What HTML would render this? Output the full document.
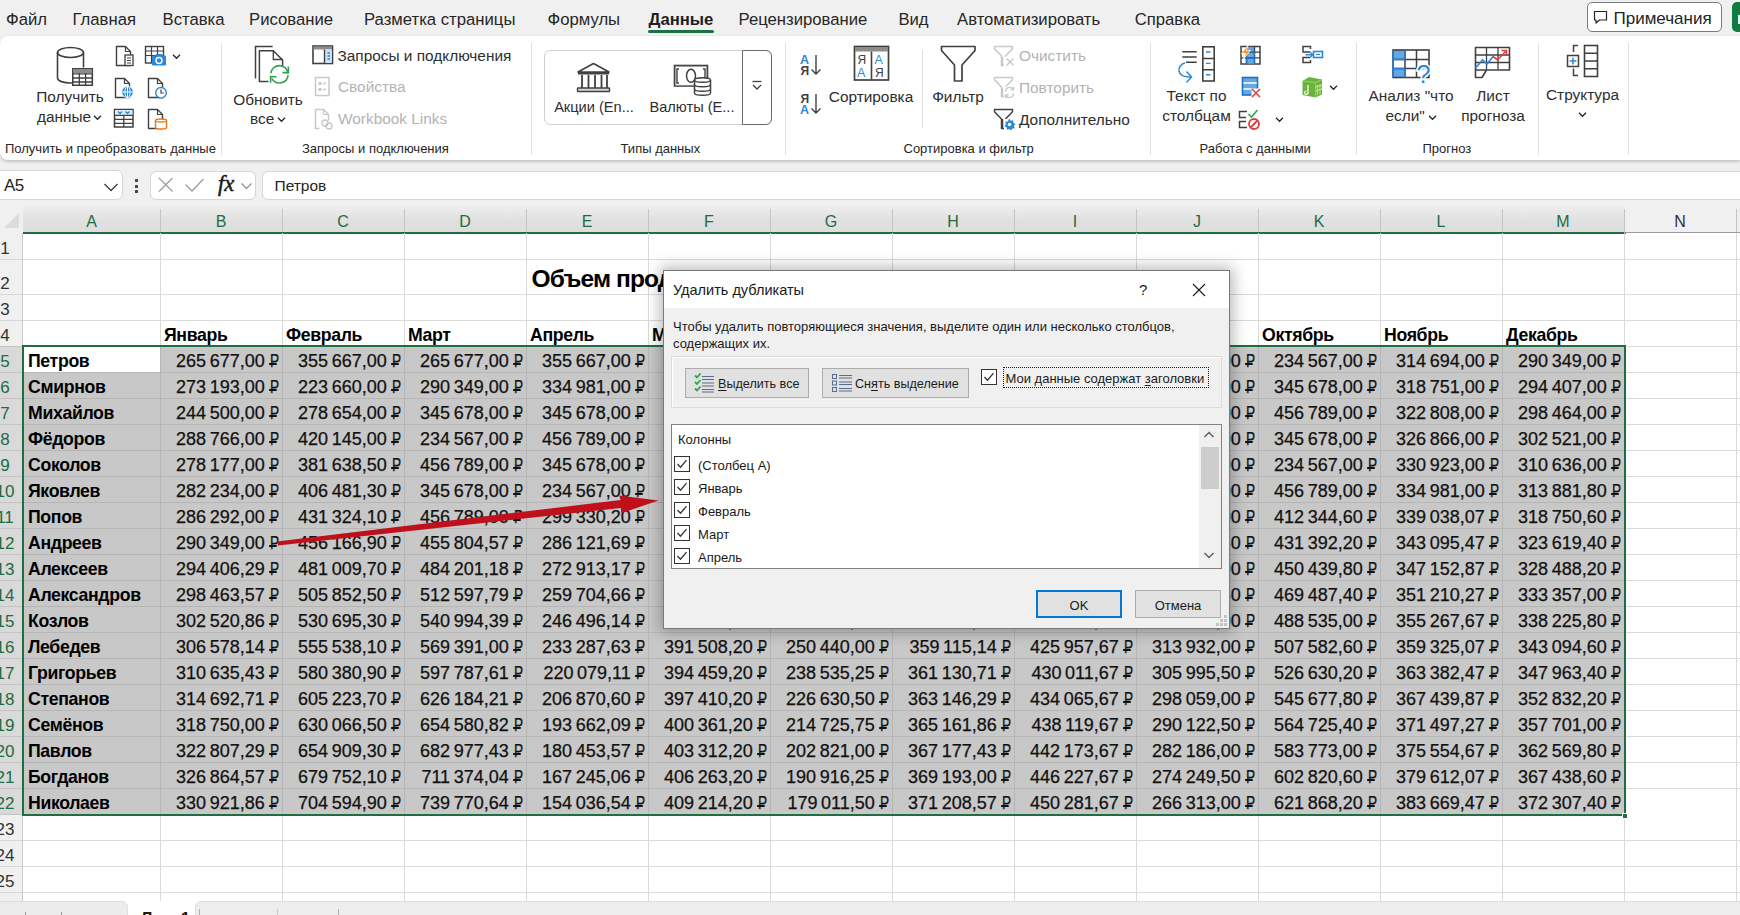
<!DOCTYPE html><html><head><meta charset="utf-8"><style>
html,body{margin:0;padding:0;}
body{width:1740px;height:915px;overflow:hidden;position:relative;background:#f0f0f0;font-family:"Liberation Sans",sans-serif;}
div,svg{box-sizing:border-box;}
.r{position:relative;display:inline-block;transform:scaleX(.76);transform-origin:100% 50%;margin-left:-2.8px;}
.r:after{content:"";position:absolute;left:-0.07em;width:0.57em;bottom:0.31em;height:0.08em;background:currentColor;}
.c{-webkit-text-stroke:0.25px #111;}
.u{text-decoration:underline;text-underline-offset:2px;}
</style></head><body>
<div style="position:absolute;left:0px;top:0px;width:1740px;height:36px;background:#f0f0f0"></div>
<div style="position:absolute;left:6px;top:11.6px;font-size:16.7px;line-height:16.7px;font-weight:400;color:#262626;white-space:pre;">Файл</div>
<div style="position:absolute;left:72.5px;top:11.6px;font-size:16.7px;line-height:16.7px;font-weight:400;color:#262626;white-space:pre;">Главная</div>
<div style="position:absolute;left:162.5px;top:11.6px;font-size:16.7px;line-height:16.7px;font-weight:400;color:#262626;white-space:pre;">Вставка</div>
<div style="position:absolute;left:249px;top:11.6px;font-size:16.7px;line-height:16.7px;font-weight:400;color:#262626;white-space:pre;">Рисование</div>
<div style="position:absolute;left:364px;top:11.6px;font-size:16.7px;line-height:16.7px;font-weight:400;color:#262626;white-space:pre;">Разметка страницы</div>
<div style="position:absolute;left:547.5px;top:11.6px;font-size:16.7px;line-height:16.7px;font-weight:400;color:#262626;white-space:pre;">Формулы</div>
<div style="position:absolute;left:648.5px;top:11.6px;font-size:16.7px;line-height:16.7px;font-weight:700;color:#1f1f1f;white-space:pre;">Данные</div>
<div style="position:absolute;left:738.5px;top:11.6px;font-size:16.7px;line-height:16.7px;font-weight:400;color:#262626;white-space:pre;">Рецензирование</div>
<div style="position:absolute;left:898.4px;top:11.6px;font-size:16.7px;line-height:16.7px;font-weight:400;color:#262626;white-space:pre;">Вид</div>
<div style="position:absolute;left:957px;top:11.6px;font-size:16.7px;line-height:16.7px;font-weight:400;color:#262626;white-space:pre;">Автоматизировать</div>
<div style="position:absolute;left:1134.7px;top:11.6px;font-size:16.7px;line-height:16.7px;font-weight:400;color:#262626;white-space:pre;">Справка</div>
<div style="position:absolute;left:648px;top:30px;width:66px;height:3px;background:#1e7145;border-radius:2px"></div>
<div style="position:absolute;left:1587px;top:2px;width:135px;height:30px;background:#fff;border:1px solid #7a7a7a;border-radius:5px"></div>
<svg style="position:absolute;left:1592px;top:9px;" width="17" height="16" viewBox="0 0 17 16" fill="none"><path d="M2.5 2.5h12v8.5h-7l-3.5 3v-3h-1.5z" stroke="#242424" stroke-width="1.2" stroke-linejoin="round"/></svg>
<div style="position:absolute;left:1613.5px;top:9.6px;font-size:17px;line-height:17px;font-weight:400;color:#242424;white-space:pre;">Примечания</div>
<div style="position:absolute;left:1732px;top:2px;width:20px;height:30px;background:#107c41;border-radius:5px"></div>
<div style="position:absolute;left:1738px;top:14.5px;width:1.5px;height:9.5px;background:#e8fff0"></div>
<div style="position:absolute;left:1738px;top:22.5px;width:4px;height:1.5px;background:#e8fff0"></div>
<div style="position:absolute;left:0px;top:36px;width:1740px;height:124px;background:#fff;border-radius:8px 0 0 8px;box-shadow:0 1.5px 3px rgba(0,0,0,0.18)"></div>
<div style="position:absolute;left:221px;top:43px;width:1px;height:112px;background:#e1e1e1"></div>
<div style="position:absolute;left:531px;top:43px;width:1px;height:112px;background:#e1e1e1"></div>
<div style="position:absolute;left:785px;top:43px;width:1px;height:112px;background:#e1e1e1"></div>
<div style="position:absolute;left:1150px;top:43px;width:1px;height:112px;background:#e1e1e1"></div>
<div style="position:absolute;left:1356px;top:43px;width:1px;height:112px;background:#e1e1e1"></div>
<div style="position:absolute;left:1538px;top:43px;width:1px;height:112px;background:#e1e1e1"></div>
<div style="position:absolute;left:1628px;top:43px;width:1px;height:112px;background:#e1e1e1"></div>
<div style="position:absolute;left:922px;top:50px;width:1px;height:78px;background:#e1e1e1"></div>
<div style="position:absolute;left:5px;top:141.9px;font-size:13px;line-height:13px;font-weight:400;color:#262626;white-space:pre;">Получить и преобразовать данные</div>
<div style="position:absolute;left:302px;top:141.9px;font-size:13px;line-height:13px;font-weight:400;color:#262626;white-space:pre;">Запросы и подключения</div>
<div style="position:absolute;left:620.5px;top:141.9px;font-size:13px;line-height:13px;font-weight:400;color:#262626;white-space:pre;">Типы данных</div>
<div style="position:absolute;left:903.5px;top:141.9px;font-size:13px;line-height:13px;font-weight:400;color:#262626;white-space:pre;">Сортировка и фильтр</div>
<div style="position:absolute;left:1199.5px;top:141.9px;font-size:13px;line-height:13px;font-weight:400;color:#262626;white-space:pre;">Работа с данными</div>
<div style="position:absolute;left:1422.5px;top:141.9px;font-size:13px;line-height:13px;font-weight:400;color:#262626;white-space:pre;">Прогноз</div>
<svg style="position:absolute;left:54px;top:44px;" width="40" height="42" viewBox="0 0 40 42" fill="none"><path d="M3.5 8 v26 c0 3 6 5 13 5 h3" stroke="#404040" stroke-width="1.6"/><ellipse cx="16.5" cy="8.5" rx="13" ry="5" stroke="#404040" stroke-width="1.6"/><path d="M29.5 8.5 v15" stroke="#404040" stroke-width="1.6"/><rect x="18.8" y="24.8" width="19.5" height="16.5" fill="#fff" stroke="#404040" stroke-width="1.6"/><rect x="19" y="25" width="19" height="4" fill="#8c8c8c"/><path d="M19 34h19M19 38h19M25.3 29v12M31.6 29v12M19 29.8h19" stroke="#404040" stroke-width="1.3"/></svg>
<div style="position:absolute;left:-230px;width:600px;text-align:center;top:89.4px;font-size:15.4px;line-height:15.4px;font-weight:400;color:#2e2e2e;white-space:pre;">Получить</div>
<div style="position:absolute;left:37px;top:109.4px;font-size:15.4px;line-height:15.4px;font-weight:400;color:#2e2e2e;white-space:pre;">данные</div>
<svg style="position:absolute;left:92.5px;top:113.5px;" width="9.0" height="7.0" viewBox="0 0 9.0 7.0" fill="none"><path d="M1 1.75 l3.5 3.5 l3.5 -3.5" stroke="#262626" stroke-width="1.3"/></svg>
<svg style="position:absolute;left:114px;top:45px;" width="22" height="22" viewBox="0 0 22 22" fill="none"><path d="M2.5 1.5 h9 l5 5 v14 h-14z" fill="#fff" stroke="#404040" stroke-width="1.4" stroke-linejoin="round"/><path d="M11.5 1.5 v5 h5" stroke="#404040" stroke-width="1.2"/><rect x="11" y="10" width="8" height="10.5" fill="#fff" stroke="#404040" stroke-width="1.3"/><path d="M13 13h4M13 15.5h4M13 18h4" stroke="#404040" stroke-width="1"/></svg>
<svg style="position:absolute;left:113px;top:77px;" width="22" height="22" viewBox="0 0 22 22" fill="none"><path d="M2.5 1.5 h9 l5 5 v14 h-14z" fill="#fff" stroke="#404040" stroke-width="1.4" stroke-linejoin="round"/><path d="M11.5 1.5 v5 h5" stroke="#404040" stroke-width="1.2"/><circle cx="14.5" cy="15" r="5.8" fill="#2b88d8" stroke="#fff" stroke-width="0.8"/><path d="M8.9 15h11.2M14.5 9.4v11.2" stroke="#fff" stroke-width="1"/><ellipse cx="14.5" cy="15" rx="2.6" ry="5.6" stroke="#fff" stroke-width="0.9"/></svg>
<svg style="position:absolute;left:113px;top:108px;" width="22" height="21" viewBox="0 0 22 21" fill="none"><rect x="1.5" y="1.5" width="18.5" height="17.5" fill="#fff" stroke="#404040" stroke-width="1.5"/><rect x="2" y="2" width="17.5" height="5" fill="#dfeaf6"/><path d="M5 3.5l2 2 2-2M12.5 3.5l2 2 2-2" stroke="#2b88d8" stroke-width="1.3"/><path d="M2 7.3h18M2 11.3h18M2 15.3h18M10.8 7v12" stroke="#404040" stroke-width="1.3"/></svg>
<svg style="position:absolute;left:144px;top:45px;" width="24" height="22" viewBox="0 0 24 22" fill="none"><rect x="1.5" y="1.5" width="18" height="16.5" fill="#fff" stroke="#404040" stroke-width="1.4"/><path d="M1.5 6h18M1.5 10.5h18M7.5 1.5v16.5M13.5 1.5v16.5" stroke="#404040" stroke-width="1.2"/><rect x="8" y="10.5" width="14" height="10" rx="1" fill="#2b88d8"/><rect x="12" y="9" width="6" height="2.5" fill="#2b88d8"/><circle cx="15" cy="15.5" r="3" stroke="#fff" stroke-width="1.4"/></svg>
<svg style="position:absolute;left:171.5px;top:52.5px;" width="9.0" height="7.0" viewBox="0 0 9.0 7.0" fill="none"><path d="M1 1.75 l3.5 3.5 l3.5 -3.5" stroke="#262626" stroke-width="1.3"/></svg>
<svg style="position:absolute;left:146px;top:77px;" width="22" height="22" viewBox="0 0 22 22" fill="none"><path d="M2.5 1.5 h9 l5 5 v14 h-14z" fill="#fff" stroke="#404040" stroke-width="1.4" stroke-linejoin="round"/><path d="M11.5 1.5 v5 h5" stroke="#404040" stroke-width="1.2"/><circle cx="15" cy="15.8" r="5.3" fill="#fff" stroke="#2b88d8" stroke-width="1.4"/><path d="M15 12.5v3.5h2.8" stroke="#404040" stroke-width="1.2"/></svg>
<svg style="position:absolute;left:146px;top:108px;" width="22" height="22" viewBox="0 0 22 22" fill="none"><path d="M2.5 1.5 h9 l5 5 v14 h-14z" fill="#fff" stroke="#404040" stroke-width="1.4" stroke-linejoin="round"/><path d="M11.5 1.5 v5 h5" stroke="#404040" stroke-width="1.2"/><path d="M9.5 12.5 c0-2 11-2 11 0 v7 c0 2-11 2-11 0z" fill="#fff" stroke="#e87a1e" stroke-width="1.5"/><path d="M9.5 12.5 c0 2 11 2 11 0" stroke="#e87a1e" stroke-width="1.3"/></svg>
<svg style="position:absolute;left:254px;top:44px;" width="38" height="44" viewBox="0 0 38 44" fill="none"><path d="M1.5 34.5 V2.6 H18.7" stroke="#404040" stroke-width="1.5"/><path d="M14.5 37.5 H5.4 V6.8 H19.3 L28.6 16 V23" fill="#fff" stroke="#404040" stroke-width="1.5" stroke-linejoin="round"/><path d="M19.3 6.8 V15.5 H28.6" stroke="#404040" stroke-width="1.3"/><path d="M16.76 29.24 A8.7 8.7 0 0 1 34.05 29.39" stroke="#2f9e50" stroke-width="1.6"/><path d="M34.4 22.5 V28.6 H28.5" stroke="#2f9e50" stroke-width="1.6"/><path d="M34.07 31.06 A8.7 8.7 0 0 1 17.87 34.65" stroke="#2f9e50" stroke-width="1.6"/><path d="M16.6 38.7 V32.8 H22.5" stroke="#2f9e50" stroke-width="1.6"/></svg>
<div style="position:absolute;left:-32px;width:600px;text-align:center;top:91.9px;font-size:15.4px;line-height:15.4px;font-weight:400;color:#2e2e2e;white-space:pre;">Обновить</div>
<div style="position:absolute;left:250px;top:111.4px;font-size:15.4px;line-height:15.4px;font-weight:400;color:#2e2e2e;white-space:pre;">все</div>
<svg style="position:absolute;left:276.5px;top:115.5px;" width="9.0" height="7.0" viewBox="0 0 9.0 7.0" fill="none"><path d="M1 1.75 l3.5 3.5 l3.5 -3.5" stroke="#262626" stroke-width="1.3"/></svg>
<svg style="position:absolute;left:312px;top:45px;" width="22" height="20" viewBox="0 0 22 20" fill="none"><rect x="1" y="1" width="19.5" height="17.5" fill="#fff" stroke="#404040" stroke-width="1.6"/><rect x="1.5" y="1.5" width="18.5" height="3" fill="#8c8c8c"/><rect x="13" y="4.5" width="6.5" height="13.5" fill="#cfe3f7"/><path d="M12.5 4.5v14" stroke="#404040" stroke-width="1.4"/><path d="M15.5 8h2.5M15.5 11h2.5M15.5 14h2.5" stroke="#2b88d8" stroke-width="1.3"/></svg>
<div style="position:absolute;left:337.5px;top:47.9px;font-size:15.4px;line-height:15.4px;font-weight:400;color:#2e2e2e;white-space:pre;">Запросы и подключения</div>
<svg style="position:absolute;left:314px;top:76px;" width="18" height="21" viewBox="0 0 18 21" fill="none"><rect x="1.5" y="1.5" width="13.5" height="18" fill="#fff" stroke="#c8c8c8" stroke-width="1.5"/><rect x="4.5" y="6" width="3" height="3" fill="#c8c8c8"/><rect x="4.5" y="12" width="3" height="3" fill="#c8c8c8"/><path d="M9 7.5h3M9 13.5h3" stroke="#c8c8c8" stroke-width="1.3"/></svg>
<div style="position:absolute;left:338px;top:79.4px;font-size:15.4px;line-height:15.4px;font-weight:400;color:#b3b3b3;white-space:pre;">Свойства</div>
<svg style="position:absolute;left:314px;top:108px;" width="20" height="22" viewBox="0 0 20 22" fill="none"><path d="M1.5 1.5h8l5 5v6" stroke="#c8c8c8" stroke-width="1.5" fill="none"/><path d="M1.5 1.5v19h4" stroke="#c8c8c8" stroke-width="1.5"/><path d="M9.5 1.5v5h5" stroke="#c8c8c8" stroke-width="1.2"/><path d="M8 15 a3 3 0 0 1 6 0 a3 3 0 0 1 -6 0z M12 18 a3 3 0 0 1 6 0 a3 3 0 0 1 -6 0" stroke="#c8c8c8" stroke-width="1.4"/></svg>
<div style="position:absolute;left:338px;top:111.4px;font-size:15.4px;line-height:15.4px;font-weight:400;color:#b3b3b3;white-space:pre;">Workbook Links</div>
<div style="position:absolute;left:543.5px;top:50px;width:228px;height:75px;border:1px solid #d1d1d1;border-radius:6px;background:#fff"></div>
<div style="position:absolute;left:742px;top:50px;width:29.5px;height:75px;border:1px solid #6b6b6b;border-radius:0 6px 6px 0;background:#fff"></div>
<svg style="position:absolute;left:576px;top:62px;" width="35" height="31" viewBox="0 0 35 31" fill="none"><path d="M17.5 1.5 L33 10 H2z" fill="#fff" stroke="#404040" stroke-width="1.6" stroke-linejoin="round"/><rect x="2" y="10" width="31" height="2.5" fill="#404040"/><path d="M6 13v13M12.5 13v13M19 13v13M25.5 13v13M31 13v13" stroke="#404040" stroke-width="1.8"/><rect x="1.5" y="26" width="32" height="3.5" rx="0.5" fill="#d9d9d9" stroke="#404040" stroke-width="1.4"/></svg>
<div style="position:absolute;left:294px;width:600px;text-align:center;top:100.1px;font-size:14.6px;line-height:14.6px;font-weight:400;color:#2e2e2e;white-space:pre;">Акции (En...</div>
<svg style="position:absolute;left:673px;top:64px;" width="40" height="33" viewBox="0 0 40 33" fill="none"><rect x="1.5" y="1.5" width="33" height="20.5" fill="#fff" stroke="#404040" stroke-width="1.6"/><rect x="2.3" y="2.3" width="31.4" height="19" fill="#fff" stroke="#808080" stroke-width="0.8"/><path d="M6 5h-2v14h2M30 5h2v14h-2" stroke="#404040" stroke-width="1.4"/><ellipse cx="18" cy="11.8" rx="4.5" ry="6.5" stroke="#404040" stroke-width="1.5"/><path d="M21.5 16 c0-3 16-3 16 0 v13 c0 3-16 3-16 0z" fill="#fff" stroke="#404040" stroke-width="1.5"/><path d="M21.5 16 c0 3 16 3 16 0M21.5 20.5c0 3 16 3 16 0M21.5 25c0 3 16 3 16 0" stroke="#404040" stroke-width="1.4"/></svg>
<div style="position:absolute;left:392px;width:600px;text-align:center;top:100.1px;font-size:14.6px;line-height:14.6px;font-weight:400;color:#2e2e2e;white-space:pre;">Валюты (E...</div>
<svg style="position:absolute;left:751px;top:80px;" width="12" height="11" viewBox="0 0 12 11" fill="none"><path d="M1.5 1.5h9" stroke="#404040" stroke-width="1.3"/><path d="M2 5l4 4 4-4" stroke="#404040" stroke-width="1.3"/></svg>
<svg style="position:absolute;left:799px;top:53px;" width="24" height="24" viewBox="0 0 24 24" fill="none"><text x="1" y="10.5" font-family="Liberation Sans" font-size="12.5" font-weight="700" fill="#2b88d8">A</text><text x="1.5" y="22" font-family="Liberation Sans" font-size="12" font-weight="700" fill="#404040">Я</text><path d="M17 2v19M12.5 16.5l4.5 4.5 4.5-4.5" stroke="#404040" stroke-width="1.4"/></svg>
<svg style="position:absolute;left:799px;top:92px;" width="24" height="24" viewBox="0 0 24 24" fill="none"><text x="1.5" y="10.5" font-family="Liberation Sans" font-size="12" font-weight="700" fill="#404040">Я</text><text x="1" y="22" font-family="Liberation Sans" font-size="12.5" font-weight="700" fill="#2b88d8">A</text><path d="M17 2v19M12.5 16.5l4.5 4.5 4.5-4.5" stroke="#404040" stroke-width="1.4"/></svg>
<svg style="position:absolute;left:853px;top:45px;" width="38" height="37" viewBox="0 0 38 37" fill="none"><rect x="1.5" y="1.5" width="34" height="33.5" fill="#fff" stroke="#404040" stroke-width="1.7"/><rect x="2" y="2" width="33" height="4.5" fill="#8c8c8c"/><path d="M18.5 6.5v28" stroke="#404040" stroke-width="1.6"/><text x="4.5" y="19" font-family="Liberation Sans" font-size="12" fill="#404040">Я</text><text x="4" y="32" font-family="Liberation Sans" font-size="12.5" fill="#2b88d8">A</text><text x="21.5" y="19" font-family="Liberation Sans" font-size="12.5" fill="#2b88d8">A</text><text x="22" y="32" font-family="Liberation Sans" font-size="12" fill="#404040">Я</text></svg>
<div style="position:absolute;left:571px;width:600px;text-align:center;top:89.4px;font-size:15.4px;line-height:15.4px;font-weight:400;color:#2e2e2e;white-space:pre;">Сортировка</div>
<svg style="position:absolute;left:940px;top:45px;" width="37" height="38" viewBox="0 0 37 38" fill="none"><path d="M1.5 1.5 H35 V5.5 L22 20 V36 H14.5 V20 L1.5 5.5z" fill="#fff" stroke="#404040" stroke-width="1.7" stroke-linejoin="round"/></svg>
<div style="position:absolute;left:658px;width:600px;text-align:center;top:89.4px;font-size:15.4px;line-height:15.4px;font-weight:400;color:#2e2e2e;white-space:pre;">Фильтр</div>
<svg style="position:absolute;left:993px;top:45px;" width="22" height="22" viewBox="0 0 22 22" fill="none"><path d="M1.5 1.5 H19.5 V3.8 L12.5 11 V20.5 H8.5 V11 L1.5 3.8z" fill="#fff" stroke="#c8c8c8" stroke-width="1.5" stroke-linejoin="round"/><rect x="11" y="12" width="11" height="10" fill="#fff"/><path d="M9.5 12v8.5" stroke="#c8c8c8" stroke-width="1.5"/><path d="M13.5 13.5l7 7M20.5 13.5l-7 7" stroke="#c8c8c8" stroke-width="1.4"/></svg>
<div style="position:absolute;left:1019px;top:47.9px;font-size:15.4px;line-height:15.4px;font-weight:400;color:#b3b3b3;white-space:pre;">Очистить</div>
<svg style="position:absolute;left:993px;top:76px;" width="22" height="22" viewBox="0 0 22 22" fill="none"><path d="M1.5 1.5 H19.5 V3.8 L12.5 11 V20.5 H8.5 V11 L1.5 3.8z" fill="#fff" stroke="#c8c8c8" stroke-width="1.5" stroke-linejoin="round"/><rect x="11" y="10.5" width="11" height="11.5" fill="#fff"/><path d="M9.5 12v8.5" stroke="#c8c8c8" stroke-width="1.5"/><path d="M12.5 15.5 a4.2 4.2 0 0 1 7.5 -2.5 M20.5 17.5 a4.2 4.2 0 0 1 -7.5 2.5" stroke="#c8c8c8" stroke-width="1.4"/><path d="M20.5 10.5v3h-3M12.5 22v-3h3" stroke="#c8c8c8" stroke-width="1.3"/></svg>
<div style="position:absolute;left:1019px;top:79.9px;font-size:15.4px;line-height:15.4px;font-weight:400;color:#b3b3b3;white-space:pre;">Повторить</div>
<svg style="position:absolute;left:993px;top:108px;" width="22" height="22" viewBox="0 0 22 22" fill="none"><path d="M1.5 1.5 H19.5 V3.8 L12.5 11 V20.5 H8.5 V11 L1.5 3.8z" fill="#fff" stroke="#404040" stroke-width="1.5" stroke-linejoin="round"/><rect x="11" y="11" width="11" height="11" fill="#fff"/><path d="M9.5 11v9.5" stroke="#404040" stroke-width="1.5"/><path d="M16.5 10.5l1.2 2.2 2.5-.5 .2 2.5 2.2 1.3-1.7 1.8 .9 2.4-2.5.3-1.3 2.2-1.8-1.7-2.4.8-.3-2.5-2.2-1.3 1.7-1.8-.8-2.4 2.5-.3z" fill="#2b88d8"/><circle cx="16.5" cy="16.5" r="1.8" fill="#fff"/></svg>
<div style="position:absolute;left:1019px;top:111.9px;font-size:15.4px;line-height:15.4px;font-weight:400;color:#2e2e2e;white-space:pre;">Дополнительно</div>
<svg style="position:absolute;left:1175px;top:45px;" width="42" height="40" viewBox="0 0 42 40" fill="none"><path d="M7.3 6.7h14.4M7.3 12h14.4M11 17.3h10.7" stroke="#404040" stroke-width="1.6"/><path d="M10 17.8 C1.5 20.5 0.5 32.5 16 32" stroke="#2b88d8" stroke-width="1.5"/><path d="M11.5 26.5l5 5.5-5 5.5" stroke="#2b88d8" stroke-width="1.5"/><rect x="27.8" y="1.8" width="11.4" height="34.2" fill="#fff" stroke="#404040" stroke-width="1.6"/><path d="M27.8 13.4h11.4M27.8 24.8h11.4" stroke="#404040" stroke-width="1.5"/><path d="M31 7h4.5M31 18.4h4.5M31 29.8h4.5" stroke="#2b88d8" stroke-width="1.4"/></svg>
<div style="position:absolute;left:896.5px;width:600px;text-align:center;top:88.4px;font-size:15.4px;line-height:15.4px;font-weight:400;color:#2e2e2e;white-space:pre;">Текст по</div>
<div style="position:absolute;left:896.5px;width:600px;text-align:center;top:108.4px;font-size:15.4px;line-height:15.4px;font-weight:400;color:#2e2e2e;white-space:pre;">столбцам</div>
<svg style="position:absolute;left:1239px;top:44px;" width="23" height="22" viewBox="0 0 23 22" fill="none"><rect x="2" y="2.5" width="19" height="17.5" fill="#fff" stroke="#404040" stroke-width="1.5"/><rect x="7.5" y="3" width="8" height="16.5" fill="#64a8e8"/><path d="M2 8.2h19M2 13.8h19M7.5 2.5v17.5M15.5 2.5v17.5" stroke="#404040" stroke-width="1.3"/><path d="M7.5 8v12M15.5 8v12M7.5 13.8h8" stroke="#1f6fbf" stroke-width="1.3"/><path d="M9.5 0.5 L2.5 9.5 h4.2 l-3 6.5 L11.5 6.5 h-4.2z" fill="#f09a1e" stroke="#fff" stroke-width="0.8"/></svg>
<svg style="position:absolute;left:1241px;top:76px;" width="21" height="22" viewBox="0 0 21 22" fill="none"><rect x="1.5" y="1.5" width="15" height="17.5" fill="#64a8e8" stroke="#1f6fbf" stroke-width="1.6"/><path d="M2.3 7h13.5M2.3 13h8" stroke="#fff" stroke-width="1.4"/><rect x="10.5" y="12.5" width="10.5" height="9.5" fill="#fff"/><path d="M11 13l8 8M19 13l-8 8" stroke="#e03c3c" stroke-width="1.5"/></svg>
<svg style="position:absolute;left:1238px;top:108px;" width="24" height="22" viewBox="0 0 24 22" fill="none"><path d="M9 3.5H1.5v6H8M8 13.5H1.5v6H9" stroke="#404040" stroke-width="1.5"/><path d="M10.5 6l3 3 6-7" stroke="#33a457" stroke-width="1.6"/><circle cx="16" cy="16" r="5" fill="#fff" stroke="#e03c3c" stroke-width="1.8"/><path d="M12.5 19.5l7-7" stroke="#e03c3c" stroke-width="1.8"/></svg>
<svg style="position:absolute;left:1275.0px;top:116.0px;" width="9.0" height="7.0" viewBox="0 0 9.0 7.0" fill="none"><path d="M1 1.75 l3.5 3.5 l3.5 -3.5" stroke="#262626" stroke-width="1.3"/></svg>
<svg style="position:absolute;left:1301px;top:45px;" width="23" height="20" viewBox="0 0 23 20" fill="none"><path d="M9.5 4V1.5H2V7H9.5M9.5 12.5H2V17.5H9.5V15" stroke="#404040" stroke-width="1.5"/><path d="M4.5 9.8h7M9.5 7.5l2.3 2.3-2.3 2.3" stroke="#2b88d8" stroke-width="1.4"/><rect x="12.5" y="6.5" width="9" height="6" fill="#fff" stroke="#2b88d8" stroke-width="1.6"/><path d="M15 9.5h4" stroke="#2b88d8" stroke-width="1.2"/></svg>
<svg style="position:absolute;left:1301px;top:76px;" width="22" height="22" viewBox="0 0 22 22" fill="none"><path d="M1.5 5 L8 1 L21 3.5 V18.5 L14.5 21.5 L1.5 19z" fill="#6cb33e"/><path d="M14.5 6.5V21.5M14.5 6.5 L21 3.5M1.5 5 L14.5 6.5" stroke="#9bd06b" stroke-width="1"/><path d="M16.5 9v10M19 8v10M14.5 11l6.5-2M14.5 15l6.5-2" stroke="#c9e8a9" stroke-width="0.9"/><path d="M7 9v7.5 a1.7 1.7 0 1 1 -1.5 -1.5" stroke="#fff" stroke-width="1.2"/></svg>
<svg style="position:absolute;left:1328.5px;top:83.5px;" width="9.0" height="7.0" viewBox="0 0 9.0 7.0" fill="none"><path d="M1 1.75 l3.5 3.5 l3.5 -3.5" stroke="#262626" stroke-width="1.3"/></svg>
<svg style="position:absolute;left:1391px;top:48px;" width="44" height="38" viewBox="0 0 44 38" fill="none"><rect x="2" y="2" width="12" height="9.5" fill="#64a8e8"/><rect x="2" y="20.5" width="12" height="9" fill="#64a8e8"/><rect x="2" y="2" width="36" height="27.5" fill="none" stroke="#404040" stroke-width="1.6"/><path d="M2 11.5h36M2 20.5h36M14 2v27.5M25.5 2v27.5" stroke="#404040" stroke-width="1.5"/><path d="M2 2.5v27M2 11.5h12M2 20.5h12M14 2v9.5M14 20.5v9" stroke="#2b7fd1" stroke-width="1.6"/><text x="25.5" y="35" font-family="Liberation Sans" font-size="25" fill="#2b88d8" stroke="#fff" stroke-width="3" paint-order="stroke">?</text></svg>
<div style="position:absolute;left:1111px;width:600px;text-align:center;top:88.4px;font-size:15.4px;line-height:15.4px;font-weight:400;color:#2e2e2e;white-space:pre;">Анализ "что</div>
<div style="position:absolute;left:1385.5px;top:108.4px;font-size:15.4px;line-height:15.4px;font-weight:400;color:#2e2e2e;white-space:pre;">если"</div>
<svg style="position:absolute;left:1427.5px;top:113.5px;" width="9.0" height="7.0" viewBox="0 0 9.0 7.0" fill="none"><path d="M1 1.75 l3.5 3.5 l3.5 -3.5" stroke="#262626" stroke-width="1.3"/></svg>
<svg style="position:absolute;left:1474px;top:46px;" width="38" height="34" viewBox="0 0 38 34" fill="none"><path d="M1.5 1.5H35.5V24H12.5L8 31.5H1.5z" fill="#fff" stroke="#404040" stroke-width="1.6" stroke-linejoin="round"/><path d="M1.5 9h34M1.5 16.5h34M12.5 1.5v22M24 1.5v22M1.5 24H12" stroke="#404040" stroke-width="1.3"/><path d="M1.5 22 L8.5 14 L13 18 L19 10.5" stroke="#2b88d8" stroke-width="1.6"/><path d="M19 10.5 L23.5 14 L32 5" stroke="#e03c3c" stroke-width="1.6"/><path d="M27.5 4.5H32.5V9.5" stroke="#e03c3c" stroke-width="1.6"/></svg>
<div style="position:absolute;left:1193px;width:600px;text-align:center;top:88.4px;font-size:15.4px;line-height:15.4px;font-weight:400;color:#2e2e2e;white-space:pre;">Лист</div>
<div style="position:absolute;left:1193px;width:600px;text-align:center;top:108.4px;font-size:15.4px;line-height:15.4px;font-weight:400;color:#2e2e2e;white-space:pre;">прогноза</div>
<svg style="position:absolute;left:1566px;top:44px;" width="34" height="34" viewBox="0 0 34 34" fill="none"><path d="M12 1.5H7.5V8M7.5 24.5V31.5H12" stroke="#404040" stroke-width="1.5"/><rect x="1.5" y="11.5" width="11" height="11" fill="#fff" stroke="#404040" stroke-width="1.5"/><path d="M7 13.5v7M3.5 17h7" stroke="#2b88d8" stroke-width="1.5"/><rect x="18.5" y="1.5" width="13" height="31" fill="#fff" stroke="#404040" stroke-width="1.6"/><path d="M18.5 9.3h13M18.5 17h13M18.5 24.8h13" stroke="#404040" stroke-width="1.4"/></svg>
<div style="position:absolute;left:1282.5px;width:600px;text-align:center;top:86.9px;font-size:15.4px;line-height:15.4px;font-weight:400;color:#2e2e2e;white-space:pre;">Структура</div>
<svg style="position:absolute;left:1577.5px;top:110.5px;" width="9.0" height="7.0" viewBox="0 0 9.0 7.0" fill="none"><path d="M1 1.75 l3.5 3.5 l3.5 -3.5" stroke="#262626" stroke-width="1.3"/></svg>
<div style="position:absolute;left:-6px;top:170px;width:129px;height:29.5px;background:#fff;border:1px solid #d6d6d6;border-radius:6px"></div>
<div style="position:absolute;left:4px;top:176.6px;font-size:17px;line-height:17px;font-weight:400;color:#242424;white-space:pre;letter-spacing:-0.6px;">A5</div>
<svg style="position:absolute;left:103px;top:181px;" width="16" height="12" viewBox="0 0 16 12" fill="none"><path d="M1.5 3 l6.5 6.5 6.5-6.5" stroke="#404040" stroke-width="1.4"/></svg>
<div style="position:absolute;left:135px;top:179px;width:3px;height:3px;background:#444;border-radius:0.5px"></div>
<div style="position:absolute;left:135px;top:184.5px;width:3px;height:3px;background:#444;border-radius:0.5px"></div>
<div style="position:absolute;left:135px;top:189.5px;width:3px;height:3px;background:#444;border-radius:0.5px"></div>
<div style="position:absolute;left:149.5px;top:170.5px;width:106px;height:29px;background:#fff;border:1px solid #d6d6d6;border-radius:6px"></div>
<svg style="position:absolute;left:157px;top:176px;" width="18" height="17" viewBox="0 0 18 17" fill="none"><path d="M2 2l13.5 13.5M15.5 2L2 15.5" stroke="#9e9e9e" stroke-width="1.3"/></svg>
<svg style="position:absolute;left:184px;top:176px;" width="21" height="17" viewBox="0 0 21 17" fill="none"><path d="M1.5 8.5l6.5 6.5 11.5-12" stroke="#9e9e9e" stroke-width="1.3"/></svg>
<div style="position:absolute;left:218px;top:173.4px;font-size:22.5px;line-height:22.5px;font-weight:400;color:#1a1a1a;white-space:pre;font-family:'Liberation Serif',serif;font-style:italic;-webkit-text-stroke:0.5px #1a1a1a;">fx</div>
<svg style="position:absolute;left:240px;top:181px;" width="14" height="10" viewBox="0 0 14 10" fill="none"><path d="M1.5 2.5 l5 5 5-5" stroke="#8a8a8a" stroke-width="1.2"/></svg>
<div style="position:absolute;left:262px;top:170.5px;width:1490px;height:29px;background:#fff;border:1px solid #d6d6d6;border-radius:6px"></div>
<div style="position:absolute;left:274.5px;top:177.8px;font-size:15.5px;line-height:15.5px;font-weight:400;color:#242424;white-space:pre;">Петров</div>
<div style="position:absolute;left:23px;top:233px;width:1717px;height:690px;background:#fff"></div>
<div style="position:absolute;left:23px;top:346px;width:1603px;height:469px;background:#c8c8c8"></div>
<div style="position:absolute;left:24px;top:347px;width:136px;height:25px;background:#fff"></div>
<div style="position:absolute;left:0px;top:206px;width:23px;height:27px;background:#f0f0f0"></div>
<svg style="position:absolute;left:3px;top:212px;" width="17" height="17" viewBox="0 0 17 17" fill="none"><path d="M16 1 V16 H1z" fill="#dcdcdc"/></svg>
<div style="position:absolute;left:23px;top:206px;width:1601px;height:27px;background:linear-gradient(#eeeeee,#e0e0e0 55%,#dddddd)"></div>
<div style="position:absolute;left:1624px;top:206px;width:116px;height:27px;background:#f0f0f0"></div>
<div style="position:absolute;left:-208.5px;width:600px;text-align:center;top:213.9px;font-size:16px;line-height:16px;font-weight:400;color:#1e6b41;white-space:pre;">A</div>
<div style="position:absolute;left:-79.0px;width:600px;text-align:center;top:213.9px;font-size:16px;line-height:16px;font-weight:400;color:#1e6b41;white-space:pre;">B</div>
<div style="position:absolute;left:160px;top:209px;width:1px;height:24px;background:#c4c4c4"></div>
<div style="position:absolute;left:43.0px;width:600px;text-align:center;top:213.9px;font-size:16px;line-height:16px;font-weight:400;color:#1e6b41;white-space:pre;">C</div>
<div style="position:absolute;left:282px;top:209px;width:1px;height:24px;background:#c4c4c4"></div>
<div style="position:absolute;left:165.0px;width:600px;text-align:center;top:213.9px;font-size:16px;line-height:16px;font-weight:400;color:#1e6b41;white-space:pre;">D</div>
<div style="position:absolute;left:404px;top:209px;width:1px;height:24px;background:#c4c4c4"></div>
<div style="position:absolute;left:287.0px;width:600px;text-align:center;top:213.9px;font-size:16px;line-height:16px;font-weight:400;color:#1e6b41;white-space:pre;">E</div>
<div style="position:absolute;left:526px;top:209px;width:1px;height:24px;background:#c4c4c4"></div>
<div style="position:absolute;left:409.0px;width:600px;text-align:center;top:213.9px;font-size:16px;line-height:16px;font-weight:400;color:#1e6b41;white-space:pre;">F</div>
<div style="position:absolute;left:648px;top:209px;width:1px;height:24px;background:#c4c4c4"></div>
<div style="position:absolute;left:531.0px;width:600px;text-align:center;top:213.9px;font-size:16px;line-height:16px;font-weight:400;color:#1e6b41;white-space:pre;">G</div>
<div style="position:absolute;left:770px;top:209px;width:1px;height:24px;background:#c4c4c4"></div>
<div style="position:absolute;left:653.0px;width:600px;text-align:center;top:213.9px;font-size:16px;line-height:16px;font-weight:400;color:#1e6b41;white-space:pre;">H</div>
<div style="position:absolute;left:892px;top:209px;width:1px;height:24px;background:#c4c4c4"></div>
<div style="position:absolute;left:775.0px;width:600px;text-align:center;top:213.9px;font-size:16px;line-height:16px;font-weight:400;color:#1e6b41;white-space:pre;">I</div>
<div style="position:absolute;left:1014px;top:209px;width:1px;height:24px;background:#c4c4c4"></div>
<div style="position:absolute;left:897.0px;width:600px;text-align:center;top:213.9px;font-size:16px;line-height:16px;font-weight:400;color:#1e6b41;white-space:pre;">J</div>
<div style="position:absolute;left:1136px;top:209px;width:1px;height:24px;background:#c4c4c4"></div>
<div style="position:absolute;left:1019.0px;width:600px;text-align:center;top:213.9px;font-size:16px;line-height:16px;font-weight:400;color:#1e6b41;white-space:pre;">K</div>
<div style="position:absolute;left:1258px;top:209px;width:1px;height:24px;background:#c4c4c4"></div>
<div style="position:absolute;left:1141.0px;width:600px;text-align:center;top:213.9px;font-size:16px;line-height:16px;font-weight:400;color:#1e6b41;white-space:pre;">L</div>
<div style="position:absolute;left:1380px;top:209px;width:1px;height:24px;background:#c4c4c4"></div>
<div style="position:absolute;left:1263.0px;width:600px;text-align:center;top:213.9px;font-size:16px;line-height:16px;font-weight:400;color:#1e6b41;white-space:pre;">M</div>
<div style="position:absolute;left:1502px;top:209px;width:1px;height:24px;background:#c4c4c4"></div>
<div style="position:absolute;left:1380.0px;width:600px;text-align:center;top:213.9px;font-size:16px;line-height:16px;font-weight:400;color:#333333;white-space:pre;">N</div>
<div style="position:absolute;left:1624px;top:209px;width:1px;height:24px;background:#c4c4c4"></div>
<div style="position:absolute;left:1736px;top:209px;width:1px;height:24px;background:#c4c4c4"></div>
<div style="position:absolute;left:23px;top:232px;width:1603px;height:2px;background:#1e6e42"></div>
<div style="position:absolute;left:1624px;top:232px;width:116px;height:1px;background:#9c9c9c"></div>
<div style="position:absolute;left:0px;top:233px;width:22px;height:26px;background:#f0f0f0"></div>
<div style="position:absolute;left:0px;top:259px;width:22px;height:35px;background:#f0f0f0"></div>
<div style="position:absolute;left:0px;top:294px;width:22px;height:26px;background:#f0f0f0"></div>
<div style="position:absolute;left:0px;top:320px;width:22px;height:26px;background:#f0f0f0"></div>
<div style="position:absolute;left:0px;top:346px;width:22px;height:26px;background:#d9d9d9"></div>
<div style="position:absolute;left:0px;top:372px;width:22px;height:26px;background:#d9d9d9"></div>
<div style="position:absolute;left:0px;top:398px;width:22px;height:26px;background:#d9d9d9"></div>
<div style="position:absolute;left:0px;top:424px;width:22px;height:26px;background:#d9d9d9"></div>
<div style="position:absolute;left:0px;top:450px;width:22px;height:26px;background:#d9d9d9"></div>
<div style="position:absolute;left:0px;top:476px;width:22px;height:26px;background:#d9d9d9"></div>
<div style="position:absolute;left:0px;top:502px;width:22px;height:26px;background:#d9d9d9"></div>
<div style="position:absolute;left:0px;top:528px;width:22px;height:26px;background:#d9d9d9"></div>
<div style="position:absolute;left:0px;top:554px;width:22px;height:26px;background:#d9d9d9"></div>
<div style="position:absolute;left:0px;top:580px;width:22px;height:26px;background:#d9d9d9"></div>
<div style="position:absolute;left:0px;top:606px;width:22px;height:26px;background:#d9d9d9"></div>
<div style="position:absolute;left:0px;top:632px;width:22px;height:26px;background:#d9d9d9"></div>
<div style="position:absolute;left:0px;top:658px;width:22px;height:26px;background:#d9d9d9"></div>
<div style="position:absolute;left:0px;top:684px;width:22px;height:26px;background:#d9d9d9"></div>
<div style="position:absolute;left:0px;top:710px;width:22px;height:26px;background:#d9d9d9"></div>
<div style="position:absolute;left:0px;top:736px;width:22px;height:26px;background:#d9d9d9"></div>
<div style="position:absolute;left:0px;top:762px;width:22px;height:26px;background:#d9d9d9"></div>
<div style="position:absolute;left:0px;top:788px;width:22px;height:26px;background:#d9d9d9"></div>
<div style="position:absolute;left:0px;top:814px;width:22px;height:26px;background:#f0f0f0"></div>
<div style="position:absolute;left:0px;top:840px;width:22px;height:26px;background:#f0f0f0"></div>
<div style="position:absolute;left:0px;top:866px;width:22px;height:26px;background:#f0f0f0"></div>
<div style="position:absolute;left:0px;top:892px;width:22px;height:26px;background:#f0f0f0"></div>
<div style="position:absolute;left:0px;top:259px;width:22px;height:1px;background:#d6d6d6"></div>
<div style="position:absolute;left:-295px;width:600px;text-align:center;top:239.6px;font-size:17px;line-height:17px;font-weight:400;color:#333333;white-space:pre;">1</div>
<div style="position:absolute;left:0px;top:294px;width:22px;height:1px;background:#d6d6d6"></div>
<div style="position:absolute;left:-295px;width:600px;text-align:center;top:274.6px;font-size:17px;line-height:17px;font-weight:400;color:#333333;white-space:pre;">2</div>
<div style="position:absolute;left:0px;top:320px;width:22px;height:1px;background:#d6d6d6"></div>
<div style="position:absolute;left:-295px;width:600px;text-align:center;top:300.6px;font-size:17px;line-height:17px;font-weight:400;color:#333333;white-space:pre;">3</div>
<div style="position:absolute;left:0px;top:346px;width:22px;height:1px;background:#c4c4c4"></div>
<div style="position:absolute;left:-295px;width:600px;text-align:center;top:326.6px;font-size:17px;line-height:17px;font-weight:400;color:#333333;white-space:pre;">4</div>
<div style="position:absolute;left:0px;top:372px;width:22px;height:1px;background:#c4c4c4"></div>
<div style="position:absolute;left:-295px;width:600px;text-align:center;top:352.6px;font-size:17px;line-height:17px;font-weight:400;color:#1e6b41;white-space:pre;">5</div>
<div style="position:absolute;left:0px;top:398px;width:22px;height:1px;background:#c4c4c4"></div>
<div style="position:absolute;left:-295px;width:600px;text-align:center;top:378.6px;font-size:17px;line-height:17px;font-weight:400;color:#1e6b41;white-space:pre;">6</div>
<div style="position:absolute;left:0px;top:424px;width:22px;height:1px;background:#c4c4c4"></div>
<div style="position:absolute;left:-295px;width:600px;text-align:center;top:404.6px;font-size:17px;line-height:17px;font-weight:400;color:#1e6b41;white-space:pre;">7</div>
<div style="position:absolute;left:0px;top:450px;width:22px;height:1px;background:#c4c4c4"></div>
<div style="position:absolute;left:-295px;width:600px;text-align:center;top:430.6px;font-size:17px;line-height:17px;font-weight:400;color:#1e6b41;white-space:pre;">8</div>
<div style="position:absolute;left:0px;top:476px;width:22px;height:1px;background:#c4c4c4"></div>
<div style="position:absolute;left:-295px;width:600px;text-align:center;top:456.6px;font-size:17px;line-height:17px;font-weight:400;color:#1e6b41;white-space:pre;">9</div>
<div style="position:absolute;left:0px;top:502px;width:22px;height:1px;background:#c4c4c4"></div>
<div style="position:absolute;left:-295px;width:600px;text-align:center;top:482.6px;font-size:17px;line-height:17px;font-weight:400;color:#1e6b41;white-space:pre;">10</div>
<div style="position:absolute;left:0px;top:528px;width:22px;height:1px;background:#c4c4c4"></div>
<div style="position:absolute;left:-295px;width:600px;text-align:center;top:508.6px;font-size:17px;line-height:17px;font-weight:400;color:#1e6b41;white-space:pre;">11</div>
<div style="position:absolute;left:0px;top:554px;width:22px;height:1px;background:#c4c4c4"></div>
<div style="position:absolute;left:-295px;width:600px;text-align:center;top:534.5px;font-size:17px;line-height:17px;font-weight:400;color:#1e6b41;white-space:pre;">12</div>
<div style="position:absolute;left:0px;top:580px;width:22px;height:1px;background:#c4c4c4"></div>
<div style="position:absolute;left:-295px;width:600px;text-align:center;top:560.5px;font-size:17px;line-height:17px;font-weight:400;color:#1e6b41;white-space:pre;">13</div>
<div style="position:absolute;left:0px;top:606px;width:22px;height:1px;background:#c4c4c4"></div>
<div style="position:absolute;left:-295px;width:600px;text-align:center;top:586.5px;font-size:17px;line-height:17px;font-weight:400;color:#1e6b41;white-space:pre;">14</div>
<div style="position:absolute;left:0px;top:632px;width:22px;height:1px;background:#c4c4c4"></div>
<div style="position:absolute;left:-295px;width:600px;text-align:center;top:612.5px;font-size:17px;line-height:17px;font-weight:400;color:#1e6b41;white-space:pre;">15</div>
<div style="position:absolute;left:0px;top:658px;width:22px;height:1px;background:#c4c4c4"></div>
<div style="position:absolute;left:-295px;width:600px;text-align:center;top:638.5px;font-size:17px;line-height:17px;font-weight:400;color:#1e6b41;white-space:pre;">16</div>
<div style="position:absolute;left:0px;top:684px;width:22px;height:1px;background:#c4c4c4"></div>
<div style="position:absolute;left:-295px;width:600px;text-align:center;top:664.5px;font-size:17px;line-height:17px;font-weight:400;color:#1e6b41;white-space:pre;">17</div>
<div style="position:absolute;left:0px;top:710px;width:22px;height:1px;background:#c4c4c4"></div>
<div style="position:absolute;left:-295px;width:600px;text-align:center;top:690.5px;font-size:17px;line-height:17px;font-weight:400;color:#1e6b41;white-space:pre;">18</div>
<div style="position:absolute;left:0px;top:736px;width:22px;height:1px;background:#c4c4c4"></div>
<div style="position:absolute;left:-295px;width:600px;text-align:center;top:716.5px;font-size:17px;line-height:17px;font-weight:400;color:#1e6b41;white-space:pre;">19</div>
<div style="position:absolute;left:0px;top:762px;width:22px;height:1px;background:#c4c4c4"></div>
<div style="position:absolute;left:-295px;width:600px;text-align:center;top:742.5px;font-size:17px;line-height:17px;font-weight:400;color:#1e6b41;white-space:pre;">20</div>
<div style="position:absolute;left:0px;top:788px;width:22px;height:1px;background:#c4c4c4"></div>
<div style="position:absolute;left:-295px;width:600px;text-align:center;top:768.5px;font-size:17px;line-height:17px;font-weight:400;color:#1e6b41;white-space:pre;">21</div>
<div style="position:absolute;left:0px;top:814px;width:22px;height:1px;background:#c4c4c4"></div>
<div style="position:absolute;left:-295px;width:600px;text-align:center;top:794.5px;font-size:17px;line-height:17px;font-weight:400;color:#1e6b41;white-space:pre;">22</div>
<div style="position:absolute;left:0px;top:840px;width:22px;height:1px;background:#d6d6d6"></div>
<div style="position:absolute;left:-295px;width:600px;text-align:center;top:820.5px;font-size:17px;line-height:17px;font-weight:400;color:#333333;white-space:pre;">23</div>
<div style="position:absolute;left:0px;top:866px;width:22px;height:1px;background:#d6d6d6"></div>
<div style="position:absolute;left:-295px;width:600px;text-align:center;top:846.5px;font-size:17px;line-height:17px;font-weight:400;color:#333333;white-space:pre;">24</div>
<div style="position:absolute;left:0px;top:892px;width:22px;height:1px;background:#d6d6d6"></div>
<div style="position:absolute;left:-295px;width:600px;text-align:center;top:872.5px;font-size:17px;line-height:17px;font-weight:400;color:#333333;white-space:pre;">25</div>
<div style="position:absolute;left:0px;top:918px;width:22px;height:1px;background:#d6d6d6"></div>
<div style="position:absolute;left:-295px;width:600px;text-align:center;top:898.5px;font-size:17px;line-height:17px;font-weight:400;color:#333333;white-space:pre;">26</div>
<div style="position:absolute;left:22px;top:233px;width:1px;height:690px;background:#c8c8c8"></div>
<div style="position:absolute;left:23px;top:259px;width:1717px;height:1px;background:#dadada"></div>
<div style="position:absolute;left:23px;top:294px;width:1717px;height:1px;background:#dadada"></div>
<div style="position:absolute;left:23px;top:320px;width:1717px;height:1px;background:#dadada"></div>
<div style="position:absolute;left:23px;top:346px;width:1717px;height:1px;background:#dadada"></div>
<div style="position:absolute;left:23px;top:372px;width:1601px;height:1px;background:#b6b6b6"></div>
<div style="position:absolute;left:1626px;top:372px;width:114px;height:1px;background:#dadada"></div>
<div style="position:absolute;left:23px;top:398px;width:1601px;height:1px;background:#b6b6b6"></div>
<div style="position:absolute;left:1626px;top:398px;width:114px;height:1px;background:#dadada"></div>
<div style="position:absolute;left:23px;top:424px;width:1601px;height:1px;background:#b6b6b6"></div>
<div style="position:absolute;left:1626px;top:424px;width:114px;height:1px;background:#dadada"></div>
<div style="position:absolute;left:23px;top:450px;width:1601px;height:1px;background:#b6b6b6"></div>
<div style="position:absolute;left:1626px;top:450px;width:114px;height:1px;background:#dadada"></div>
<div style="position:absolute;left:23px;top:476px;width:1601px;height:1px;background:#b6b6b6"></div>
<div style="position:absolute;left:1626px;top:476px;width:114px;height:1px;background:#dadada"></div>
<div style="position:absolute;left:23px;top:502px;width:1601px;height:1px;background:#b6b6b6"></div>
<div style="position:absolute;left:1626px;top:502px;width:114px;height:1px;background:#dadada"></div>
<div style="position:absolute;left:23px;top:528px;width:1601px;height:1px;background:#b6b6b6"></div>
<div style="position:absolute;left:1626px;top:528px;width:114px;height:1px;background:#dadada"></div>
<div style="position:absolute;left:23px;top:554px;width:1601px;height:1px;background:#b6b6b6"></div>
<div style="position:absolute;left:1626px;top:554px;width:114px;height:1px;background:#dadada"></div>
<div style="position:absolute;left:23px;top:580px;width:1601px;height:1px;background:#b6b6b6"></div>
<div style="position:absolute;left:1626px;top:580px;width:114px;height:1px;background:#dadada"></div>
<div style="position:absolute;left:23px;top:606px;width:1601px;height:1px;background:#b6b6b6"></div>
<div style="position:absolute;left:1626px;top:606px;width:114px;height:1px;background:#dadada"></div>
<div style="position:absolute;left:23px;top:632px;width:1601px;height:1px;background:#b6b6b6"></div>
<div style="position:absolute;left:1626px;top:632px;width:114px;height:1px;background:#dadada"></div>
<div style="position:absolute;left:23px;top:658px;width:1601px;height:1px;background:#b6b6b6"></div>
<div style="position:absolute;left:1626px;top:658px;width:114px;height:1px;background:#dadada"></div>
<div style="position:absolute;left:23px;top:684px;width:1601px;height:1px;background:#b6b6b6"></div>
<div style="position:absolute;left:1626px;top:684px;width:114px;height:1px;background:#dadada"></div>
<div style="position:absolute;left:23px;top:710px;width:1601px;height:1px;background:#b6b6b6"></div>
<div style="position:absolute;left:1626px;top:710px;width:114px;height:1px;background:#dadada"></div>
<div style="position:absolute;left:23px;top:736px;width:1601px;height:1px;background:#b6b6b6"></div>
<div style="position:absolute;left:1626px;top:736px;width:114px;height:1px;background:#dadada"></div>
<div style="position:absolute;left:23px;top:762px;width:1601px;height:1px;background:#b6b6b6"></div>
<div style="position:absolute;left:1626px;top:762px;width:114px;height:1px;background:#dadada"></div>
<div style="position:absolute;left:23px;top:788px;width:1601px;height:1px;background:#b6b6b6"></div>
<div style="position:absolute;left:1626px;top:788px;width:114px;height:1px;background:#dadada"></div>
<div style="position:absolute;left:23px;top:840px;width:1717px;height:1px;background:#dadada"></div>
<div style="position:absolute;left:23px;top:866px;width:1717px;height:1px;background:#dadada"></div>
<div style="position:absolute;left:23px;top:892px;width:1717px;height:1px;background:#dadada"></div>
<div style="position:absolute;left:23px;top:918px;width:1717px;height:1px;background:#dadada"></div>
<div style="position:absolute;left:160px;top:233px;width:1px;height:113px;background:#dadada"></div>
<div style="position:absolute;left:160px;top:346px;width:1px;height:468px;background:#b6b6b6"></div>
<div style="position:absolute;left:160px;top:816px;width:1px;height:90px;background:#dadada"></div>
<div style="position:absolute;left:282px;top:233px;width:1px;height:113px;background:#dadada"></div>
<div style="position:absolute;left:282px;top:346px;width:1px;height:468px;background:#b6b6b6"></div>
<div style="position:absolute;left:282px;top:816px;width:1px;height:90px;background:#dadada"></div>
<div style="position:absolute;left:404px;top:233px;width:1px;height:113px;background:#dadada"></div>
<div style="position:absolute;left:404px;top:346px;width:1px;height:468px;background:#b6b6b6"></div>
<div style="position:absolute;left:404px;top:816px;width:1px;height:90px;background:#dadada"></div>
<div style="position:absolute;left:526px;top:233px;width:1px;height:113px;background:#dadada"></div>
<div style="position:absolute;left:526px;top:346px;width:1px;height:468px;background:#b6b6b6"></div>
<div style="position:absolute;left:526px;top:816px;width:1px;height:90px;background:#dadada"></div>
<div style="position:absolute;left:648px;top:233px;width:1px;height:113px;background:#dadada"></div>
<div style="position:absolute;left:648px;top:346px;width:1px;height:468px;background:#b6b6b6"></div>
<div style="position:absolute;left:648px;top:816px;width:1px;height:90px;background:#dadada"></div>
<div style="position:absolute;left:770px;top:233px;width:1px;height:113px;background:#dadada"></div>
<div style="position:absolute;left:770px;top:346px;width:1px;height:468px;background:#b6b6b6"></div>
<div style="position:absolute;left:770px;top:816px;width:1px;height:90px;background:#dadada"></div>
<div style="position:absolute;left:892px;top:233px;width:1px;height:113px;background:#dadada"></div>
<div style="position:absolute;left:892px;top:346px;width:1px;height:468px;background:#b6b6b6"></div>
<div style="position:absolute;left:892px;top:816px;width:1px;height:90px;background:#dadada"></div>
<div style="position:absolute;left:1014px;top:233px;width:1px;height:113px;background:#dadada"></div>
<div style="position:absolute;left:1014px;top:346px;width:1px;height:468px;background:#b6b6b6"></div>
<div style="position:absolute;left:1014px;top:816px;width:1px;height:90px;background:#dadada"></div>
<div style="position:absolute;left:1136px;top:233px;width:1px;height:113px;background:#dadada"></div>
<div style="position:absolute;left:1136px;top:346px;width:1px;height:468px;background:#b6b6b6"></div>
<div style="position:absolute;left:1136px;top:816px;width:1px;height:90px;background:#dadada"></div>
<div style="position:absolute;left:1258px;top:233px;width:1px;height:113px;background:#dadada"></div>
<div style="position:absolute;left:1258px;top:346px;width:1px;height:468px;background:#b6b6b6"></div>
<div style="position:absolute;left:1258px;top:816px;width:1px;height:90px;background:#dadada"></div>
<div style="position:absolute;left:1380px;top:233px;width:1px;height:113px;background:#dadada"></div>
<div style="position:absolute;left:1380px;top:346px;width:1px;height:468px;background:#b6b6b6"></div>
<div style="position:absolute;left:1380px;top:816px;width:1px;height:90px;background:#dadada"></div>
<div style="position:absolute;left:1502px;top:233px;width:1px;height:113px;background:#dadada"></div>
<div style="position:absolute;left:1502px;top:346px;width:1px;height:468px;background:#b6b6b6"></div>
<div style="position:absolute;left:1502px;top:816px;width:1px;height:90px;background:#dadada"></div>
<div style="position:absolute;left:1624px;top:233px;width:1px;height:113px;background:#dadada"></div>
<div style="position:absolute;left:1624px;top:816px;width:1px;height:90px;background:#dadada"></div>
<div style="position:absolute;left:1736px;top:233px;width:1px;height:113px;background:#dadada"></div>
<div style="position:absolute;left:1736px;top:816px;width:1px;height:90px;background:#dadada"></div>
<div style="position:absolute;left:1736px;top:346px;width:1px;height:470px;background:#dadada"></div>
<div style="position:absolute;left:22px;top:345px;width:1604px;height:2px;background:#1e6e42"></div>
<div style="position:absolute;left:22px;top:814px;width:1604px;height:2px;background:#1e6e42"></div>
<div style="position:absolute;left:22px;top:345px;width:2px;height:471px;background:#1e6e42"></div>
<div style="position:absolute;left:1624px;top:345px;width:2px;height:468px;background:#1e6e42"></div>
<div style="position:absolute;left:1621.5px;top:812.5px;width:6px;height:6px;background:#1e6e42;border:1px solid #fff"></div>
<div style="position:absolute;left:531.5px;top:266.7px;font-size:24.5px;line-height:24.5px;font-weight:700;color:#000;white-space:pre;letter-spacing:-0.9px;">Объем продаж</div>
<div style="position:absolute;left:164px;top:326.5px;font-size:17.7px;line-height:17.7px;font-weight:700;color:#000;white-space:pre;letter-spacing:-0.35px;">Январь</div>
<div style="position:absolute;left:286px;top:326.5px;font-size:17.7px;line-height:17.7px;font-weight:700;color:#000;white-space:pre;letter-spacing:-0.35px;">Февраль</div>
<div style="position:absolute;left:408px;top:326.5px;font-size:17.7px;line-height:17.7px;font-weight:700;color:#000;white-space:pre;letter-spacing:-0.35px;">Март</div>
<div style="position:absolute;left:530px;top:326.5px;font-size:17.7px;line-height:17.7px;font-weight:700;color:#000;white-space:pre;letter-spacing:-0.35px;">Апрель</div>
<div style="position:absolute;left:652px;top:326.5px;font-size:17.7px;line-height:17.7px;font-weight:700;color:#000;white-space:pre;letter-spacing:-0.35px;">Май</div>
<div style="position:absolute;left:774px;top:326.5px;font-size:17.7px;line-height:17.7px;font-weight:700;color:#000;white-space:pre;letter-spacing:-0.35px;">Июнь</div>
<div style="position:absolute;left:896px;top:326.5px;font-size:17.7px;line-height:17.7px;font-weight:700;color:#000;white-space:pre;letter-spacing:-0.35px;">Июль</div>
<div style="position:absolute;left:1018px;top:326.5px;font-size:17.7px;line-height:17.7px;font-weight:700;color:#000;white-space:pre;letter-spacing:-0.35px;">Август</div>
<div style="position:absolute;left:1140px;top:326.5px;font-size:17.7px;line-height:17.7px;font-weight:700;color:#000;white-space:pre;letter-spacing:-0.35px;">Сентябрь</div>
<div style="position:absolute;left:1262px;top:326.5px;font-size:17.7px;line-height:17.7px;font-weight:700;color:#000;white-space:pre;letter-spacing:-0.35px;">Октябрь</div>
<div style="position:absolute;left:1384px;top:326.5px;font-size:17.7px;line-height:17.7px;font-weight:700;color:#000;white-space:pre;letter-spacing:-0.35px;">Ноябрь</div>
<div style="position:absolute;left:1506px;top:326.5px;font-size:17.7px;line-height:17.7px;font-weight:700;color:#000;white-space:pre;letter-spacing:-0.35px;">Декабрь</div>
<div style="position:absolute;left:28px;top:352.8px;font-size:17.7px;line-height:17.7px;font-weight:700;color:#000;white-space:pre;letter-spacing:-0.35px;">Петров</div>
<div style="position:absolute;left:-321px;width:600px;text-align:right;top:352.2px;font-size:18px;line-height:18px;font-weight:400;color:#111;white-space:pre;-webkit-text-stroke:0.25px #111;">265 677,00 <span class="r">Р</span></div>
<div style="position:absolute;left:-199px;width:600px;text-align:right;top:352.2px;font-size:18px;line-height:18px;font-weight:400;color:#111;white-space:pre;-webkit-text-stroke:0.25px #111;">355 667,00 <span class="r">Р</span></div>
<div style="position:absolute;left:-77px;width:600px;text-align:right;top:352.2px;font-size:18px;line-height:18px;font-weight:400;color:#111;white-space:pre;-webkit-text-stroke:0.25px #111;">265 677,00 <span class="r">Р</span></div>
<div style="position:absolute;left:45px;width:600px;text-align:right;top:352.2px;font-size:18px;line-height:18px;font-weight:400;color:#111;white-space:pre;-webkit-text-stroke:0.25px #111;">355 667,00 <span class="r">Р</span></div>
<div style="position:absolute;left:167px;width:600px;text-align:right;top:352.2px;font-size:18px;line-height:18px;font-weight:400;color:#111;white-space:pre;-webkit-text-stroke:0.25px #111;">355 667,00 <span class="r">Р</span></div>
<div style="position:absolute;left:289px;width:600px;text-align:right;top:352.2px;font-size:18px;line-height:18px;font-weight:400;color:#111;white-space:pre;-webkit-text-stroke:0.25px #111;">314 694,00 <span class="r">Р</span></div>
<div style="position:absolute;left:411px;width:600px;text-align:right;top:352.2px;font-size:18px;line-height:18px;font-weight:400;color:#111;white-space:pre;-webkit-text-stroke:0.25px #111;">290 349,00 <span class="r">Р</span></div>
<div style="position:absolute;left:533px;width:600px;text-align:right;top:352.2px;font-size:18px;line-height:18px;font-weight:400;color:#111;white-space:pre;-webkit-text-stroke:0.25px #111;">355 667,00 <span class="r">Р</span></div>
<div style="position:absolute;left:655px;width:600px;text-align:right;top:352.2px;font-size:18px;line-height:18px;font-weight:400;color:#111;white-space:pre;-webkit-text-stroke:0.25px #111;">234 567,00 <span class="r">Р</span></div>
<div style="position:absolute;left:777px;width:600px;text-align:right;top:352.2px;font-size:18px;line-height:18px;font-weight:400;color:#111;white-space:pre;-webkit-text-stroke:0.25px #111;">234 567,00 <span class="r">Р</span></div>
<div style="position:absolute;left:899px;width:600px;text-align:right;top:352.2px;font-size:18px;line-height:18px;font-weight:400;color:#111;white-space:pre;-webkit-text-stroke:0.25px #111;">314 694,00 <span class="r">Р</span></div>
<div style="position:absolute;left:1021px;width:600px;text-align:right;top:352.2px;font-size:18px;line-height:18px;font-weight:400;color:#111;white-space:pre;-webkit-text-stroke:0.25px #111;">290 349,00 <span class="r">Р</span></div>
<div style="position:absolute;left:28px;top:378.8px;font-size:17.7px;line-height:17.7px;font-weight:700;color:#000;white-space:pre;letter-spacing:-0.35px;">Смирнов</div>
<div style="position:absolute;left:-321px;width:600px;text-align:right;top:378.2px;font-size:18px;line-height:18px;font-weight:400;color:#111;white-space:pre;-webkit-text-stroke:0.25px #111;">273 193,00 <span class="r">Р</span></div>
<div style="position:absolute;left:-199px;width:600px;text-align:right;top:378.2px;font-size:18px;line-height:18px;font-weight:400;color:#111;white-space:pre;-webkit-text-stroke:0.25px #111;">223 660,00 <span class="r">Р</span></div>
<div style="position:absolute;left:-77px;width:600px;text-align:right;top:378.2px;font-size:18px;line-height:18px;font-weight:400;color:#111;white-space:pre;-webkit-text-stroke:0.25px #111;">290 349,00 <span class="r">Р</span></div>
<div style="position:absolute;left:45px;width:600px;text-align:right;top:378.2px;font-size:18px;line-height:18px;font-weight:400;color:#111;white-space:pre;-webkit-text-stroke:0.25px #111;">334 981,00 <span class="r">Р</span></div>
<div style="position:absolute;left:167px;width:600px;text-align:right;top:378.2px;font-size:18px;line-height:18px;font-weight:400;color:#111;white-space:pre;-webkit-text-stroke:0.25px #111;">334 981,00 <span class="r">Р</span></div>
<div style="position:absolute;left:289px;width:600px;text-align:right;top:378.2px;font-size:18px;line-height:18px;font-weight:400;color:#111;white-space:pre;-webkit-text-stroke:0.25px #111;">318 751,00 <span class="r">Р</span></div>
<div style="position:absolute;left:411px;width:600px;text-align:right;top:378.2px;font-size:18px;line-height:18px;font-weight:400;color:#111;white-space:pre;-webkit-text-stroke:0.25px #111;">294 407,00 <span class="r">Р</span></div>
<div style="position:absolute;left:533px;width:600px;text-align:right;top:378.2px;font-size:18px;line-height:18px;font-weight:400;color:#111;white-space:pre;-webkit-text-stroke:0.25px #111;">334 981,00 <span class="r">Р</span></div>
<div style="position:absolute;left:655px;width:600px;text-align:right;top:378.2px;font-size:18px;line-height:18px;font-weight:400;color:#111;white-space:pre;-webkit-text-stroke:0.25px #111;">345 678,00 <span class="r">Р</span></div>
<div style="position:absolute;left:777px;width:600px;text-align:right;top:378.2px;font-size:18px;line-height:18px;font-weight:400;color:#111;white-space:pre;-webkit-text-stroke:0.25px #111;">345 678,00 <span class="r">Р</span></div>
<div style="position:absolute;left:899px;width:600px;text-align:right;top:378.2px;font-size:18px;line-height:18px;font-weight:400;color:#111;white-space:pre;-webkit-text-stroke:0.25px #111;">318 751,00 <span class="r">Р</span></div>
<div style="position:absolute;left:1021px;width:600px;text-align:right;top:378.2px;font-size:18px;line-height:18px;font-weight:400;color:#111;white-space:pre;-webkit-text-stroke:0.25px #111;">294 407,00 <span class="r">Р</span></div>
<div style="position:absolute;left:28px;top:404.8px;font-size:17.7px;line-height:17.7px;font-weight:700;color:#000;white-space:pre;letter-spacing:-0.35px;">Михайлов</div>
<div style="position:absolute;left:-321px;width:600px;text-align:right;top:404.2px;font-size:18px;line-height:18px;font-weight:400;color:#111;white-space:pre;-webkit-text-stroke:0.25px #111;">244 500,00 <span class="r">Р</span></div>
<div style="position:absolute;left:-199px;width:600px;text-align:right;top:404.2px;font-size:18px;line-height:18px;font-weight:400;color:#111;white-space:pre;-webkit-text-stroke:0.25px #111;">278 654,00 <span class="r">Р</span></div>
<div style="position:absolute;left:-77px;width:600px;text-align:right;top:404.2px;font-size:18px;line-height:18px;font-weight:400;color:#111;white-space:pre;-webkit-text-stroke:0.25px #111;">345 678,00 <span class="r">Р</span></div>
<div style="position:absolute;left:45px;width:600px;text-align:right;top:404.2px;font-size:18px;line-height:18px;font-weight:400;color:#111;white-space:pre;-webkit-text-stroke:0.25px #111;">345 678,00 <span class="r">Р</span></div>
<div style="position:absolute;left:167px;width:600px;text-align:right;top:404.2px;font-size:18px;line-height:18px;font-weight:400;color:#111;white-space:pre;-webkit-text-stroke:0.25px #111;">345 678,00 <span class="r">Р</span></div>
<div style="position:absolute;left:289px;width:600px;text-align:right;top:404.2px;font-size:18px;line-height:18px;font-weight:400;color:#111;white-space:pre;-webkit-text-stroke:0.25px #111;">322 808,00 <span class="r">Р</span></div>
<div style="position:absolute;left:411px;width:600px;text-align:right;top:404.2px;font-size:18px;line-height:18px;font-weight:400;color:#111;white-space:pre;-webkit-text-stroke:0.25px #111;">298 464,00 <span class="r">Р</span></div>
<div style="position:absolute;left:533px;width:600px;text-align:right;top:404.2px;font-size:18px;line-height:18px;font-weight:400;color:#111;white-space:pre;-webkit-text-stroke:0.25px #111;">345 678,00 <span class="r">Р</span></div>
<div style="position:absolute;left:655px;width:600px;text-align:right;top:404.2px;font-size:18px;line-height:18px;font-weight:400;color:#111;white-space:pre;-webkit-text-stroke:0.25px #111;">456 789,00 <span class="r">Р</span></div>
<div style="position:absolute;left:777px;width:600px;text-align:right;top:404.2px;font-size:18px;line-height:18px;font-weight:400;color:#111;white-space:pre;-webkit-text-stroke:0.25px #111;">456 789,00 <span class="r">Р</span></div>
<div style="position:absolute;left:899px;width:600px;text-align:right;top:404.2px;font-size:18px;line-height:18px;font-weight:400;color:#111;white-space:pre;-webkit-text-stroke:0.25px #111;">322 808,00 <span class="r">Р</span></div>
<div style="position:absolute;left:1021px;width:600px;text-align:right;top:404.2px;font-size:18px;line-height:18px;font-weight:400;color:#111;white-space:pre;-webkit-text-stroke:0.25px #111;">298 464,00 <span class="r">Р</span></div>
<div style="position:absolute;left:28px;top:430.8px;font-size:17.7px;line-height:17.7px;font-weight:700;color:#000;white-space:pre;letter-spacing:-0.35px;">Фёдоров</div>
<div style="position:absolute;left:-321px;width:600px;text-align:right;top:430.2px;font-size:18px;line-height:18px;font-weight:400;color:#111;white-space:pre;-webkit-text-stroke:0.25px #111;">288 766,00 <span class="r">Р</span></div>
<div style="position:absolute;left:-199px;width:600px;text-align:right;top:430.2px;font-size:18px;line-height:18px;font-weight:400;color:#111;white-space:pre;-webkit-text-stroke:0.25px #111;">420 145,00 <span class="r">Р</span></div>
<div style="position:absolute;left:-77px;width:600px;text-align:right;top:430.2px;font-size:18px;line-height:18px;font-weight:400;color:#111;white-space:pre;-webkit-text-stroke:0.25px #111;">234 567,00 <span class="r">Р</span></div>
<div style="position:absolute;left:45px;width:600px;text-align:right;top:430.2px;font-size:18px;line-height:18px;font-weight:400;color:#111;white-space:pre;-webkit-text-stroke:0.25px #111;">456 789,00 <span class="r">Р</span></div>
<div style="position:absolute;left:167px;width:600px;text-align:right;top:430.2px;font-size:18px;line-height:18px;font-weight:400;color:#111;white-space:pre;-webkit-text-stroke:0.25px #111;">456 789,00 <span class="r">Р</span></div>
<div style="position:absolute;left:289px;width:600px;text-align:right;top:430.2px;font-size:18px;line-height:18px;font-weight:400;color:#111;white-space:pre;-webkit-text-stroke:0.25px #111;">326 866,00 <span class="r">Р</span></div>
<div style="position:absolute;left:411px;width:600px;text-align:right;top:430.2px;font-size:18px;line-height:18px;font-weight:400;color:#111;white-space:pre;-webkit-text-stroke:0.25px #111;">302 521,00 <span class="r">Р</span></div>
<div style="position:absolute;left:533px;width:600px;text-align:right;top:430.2px;font-size:18px;line-height:18px;font-weight:400;color:#111;white-space:pre;-webkit-text-stroke:0.25px #111;">456 789,00 <span class="r">Р</span></div>
<div style="position:absolute;left:655px;width:600px;text-align:right;top:430.2px;font-size:18px;line-height:18px;font-weight:400;color:#111;white-space:pre;-webkit-text-stroke:0.25px #111;">345 678,00 <span class="r">Р</span></div>
<div style="position:absolute;left:777px;width:600px;text-align:right;top:430.2px;font-size:18px;line-height:18px;font-weight:400;color:#111;white-space:pre;-webkit-text-stroke:0.25px #111;">345 678,00 <span class="r">Р</span></div>
<div style="position:absolute;left:899px;width:600px;text-align:right;top:430.2px;font-size:18px;line-height:18px;font-weight:400;color:#111;white-space:pre;-webkit-text-stroke:0.25px #111;">326 866,00 <span class="r">Р</span></div>
<div style="position:absolute;left:1021px;width:600px;text-align:right;top:430.2px;font-size:18px;line-height:18px;font-weight:400;color:#111;white-space:pre;-webkit-text-stroke:0.25px #111;">302 521,00 <span class="r">Р</span></div>
<div style="position:absolute;left:28px;top:456.8px;font-size:17.7px;line-height:17.7px;font-weight:700;color:#000;white-space:pre;letter-spacing:-0.35px;">Соколов</div>
<div style="position:absolute;left:-321px;width:600px;text-align:right;top:456.2px;font-size:18px;line-height:18px;font-weight:400;color:#111;white-space:pre;-webkit-text-stroke:0.25px #111;">278 177,00 <span class="r">Р</span></div>
<div style="position:absolute;left:-199px;width:600px;text-align:right;top:456.2px;font-size:18px;line-height:18px;font-weight:400;color:#111;white-space:pre;-webkit-text-stroke:0.25px #111;">381 638,50 <span class="r">Р</span></div>
<div style="position:absolute;left:-77px;width:600px;text-align:right;top:456.2px;font-size:18px;line-height:18px;font-weight:400;color:#111;white-space:pre;-webkit-text-stroke:0.25px #111;">456 789,00 <span class="r">Р</span></div>
<div style="position:absolute;left:45px;width:600px;text-align:right;top:456.2px;font-size:18px;line-height:18px;font-weight:400;color:#111;white-space:pre;-webkit-text-stroke:0.25px #111;">345 678,00 <span class="r">Р</span></div>
<div style="position:absolute;left:167px;width:600px;text-align:right;top:456.2px;font-size:18px;line-height:18px;font-weight:400;color:#111;white-space:pre;-webkit-text-stroke:0.25px #111;">345 678,00 <span class="r">Р</span></div>
<div style="position:absolute;left:289px;width:600px;text-align:right;top:456.2px;font-size:18px;line-height:18px;font-weight:400;color:#111;white-space:pre;-webkit-text-stroke:0.25px #111;">330 923,00 <span class="r">Р</span></div>
<div style="position:absolute;left:411px;width:600px;text-align:right;top:456.2px;font-size:18px;line-height:18px;font-weight:400;color:#111;white-space:pre;-webkit-text-stroke:0.25px #111;">310 636,00 <span class="r">Р</span></div>
<div style="position:absolute;left:533px;width:600px;text-align:right;top:456.2px;font-size:18px;line-height:18px;font-weight:400;color:#111;white-space:pre;-webkit-text-stroke:0.25px #111;">345 678,00 <span class="r">Р</span></div>
<div style="position:absolute;left:655px;width:600px;text-align:right;top:456.2px;font-size:18px;line-height:18px;font-weight:400;color:#111;white-space:pre;-webkit-text-stroke:0.25px #111;">234 567,00 <span class="r">Р</span></div>
<div style="position:absolute;left:777px;width:600px;text-align:right;top:456.2px;font-size:18px;line-height:18px;font-weight:400;color:#111;white-space:pre;-webkit-text-stroke:0.25px #111;">234 567,00 <span class="r">Р</span></div>
<div style="position:absolute;left:899px;width:600px;text-align:right;top:456.2px;font-size:18px;line-height:18px;font-weight:400;color:#111;white-space:pre;-webkit-text-stroke:0.25px #111;">330 923,00 <span class="r">Р</span></div>
<div style="position:absolute;left:1021px;width:600px;text-align:right;top:456.2px;font-size:18px;line-height:18px;font-weight:400;color:#111;white-space:pre;-webkit-text-stroke:0.25px #111;">310 636,00 <span class="r">Р</span></div>
<div style="position:absolute;left:28px;top:482.8px;font-size:17.7px;line-height:17.7px;font-weight:700;color:#000;white-space:pre;letter-spacing:-0.35px;">Яковлев</div>
<div style="position:absolute;left:-321px;width:600px;text-align:right;top:482.2px;font-size:18px;line-height:18px;font-weight:400;color:#111;white-space:pre;-webkit-text-stroke:0.25px #111;">282 234,00 <span class="r">Р</span></div>
<div style="position:absolute;left:-199px;width:600px;text-align:right;top:482.2px;font-size:18px;line-height:18px;font-weight:400;color:#111;white-space:pre;-webkit-text-stroke:0.25px #111;">406 481,30 <span class="r">Р</span></div>
<div style="position:absolute;left:-77px;width:600px;text-align:right;top:482.2px;font-size:18px;line-height:18px;font-weight:400;color:#111;white-space:pre;-webkit-text-stroke:0.25px #111;">345 678,00 <span class="r">Р</span></div>
<div style="position:absolute;left:45px;width:600px;text-align:right;top:482.2px;font-size:18px;line-height:18px;font-weight:400;color:#111;white-space:pre;-webkit-text-stroke:0.25px #111;">234 567,00 <span class="r">Р</span></div>
<div style="position:absolute;left:167px;width:600px;text-align:right;top:482.2px;font-size:18px;line-height:18px;font-weight:400;color:#111;white-space:pre;-webkit-text-stroke:0.25px #111;">234 567,00 <span class="r">Р</span></div>
<div style="position:absolute;left:289px;width:600px;text-align:right;top:482.2px;font-size:18px;line-height:18px;font-weight:400;color:#111;white-space:pre;-webkit-text-stroke:0.25px #111;">334 981,00 <span class="r">Р</span></div>
<div style="position:absolute;left:411px;width:600px;text-align:right;top:482.2px;font-size:18px;line-height:18px;font-weight:400;color:#111;white-space:pre;-webkit-text-stroke:0.25px #111;">313 881,80 <span class="r">Р</span></div>
<div style="position:absolute;left:533px;width:600px;text-align:right;top:482.2px;font-size:18px;line-height:18px;font-weight:400;color:#111;white-space:pre;-webkit-text-stroke:0.25px #111;">234 567,00 <span class="r">Р</span></div>
<div style="position:absolute;left:655px;width:600px;text-align:right;top:482.2px;font-size:18px;line-height:18px;font-weight:400;color:#111;white-space:pre;-webkit-text-stroke:0.25px #111;">456 789,00 <span class="r">Р</span></div>
<div style="position:absolute;left:777px;width:600px;text-align:right;top:482.2px;font-size:18px;line-height:18px;font-weight:400;color:#111;white-space:pre;-webkit-text-stroke:0.25px #111;">456 789,00 <span class="r">Р</span></div>
<div style="position:absolute;left:899px;width:600px;text-align:right;top:482.2px;font-size:18px;line-height:18px;font-weight:400;color:#111;white-space:pre;-webkit-text-stroke:0.25px #111;">334 981,00 <span class="r">Р</span></div>
<div style="position:absolute;left:1021px;width:600px;text-align:right;top:482.2px;font-size:18px;line-height:18px;font-weight:400;color:#111;white-space:pre;-webkit-text-stroke:0.25px #111;">313 881,80 <span class="r">Р</span></div>
<div style="position:absolute;left:28px;top:508.8px;font-size:17.7px;line-height:17.7px;font-weight:700;color:#000;white-space:pre;letter-spacing:-0.35px;">Попов</div>
<div style="position:absolute;left:-321px;width:600px;text-align:right;top:508.2px;font-size:18px;line-height:18px;font-weight:400;color:#111;white-space:pre;-webkit-text-stroke:0.25px #111;">286 292,00 <span class="r">Р</span></div>
<div style="position:absolute;left:-199px;width:600px;text-align:right;top:508.2px;font-size:18px;line-height:18px;font-weight:400;color:#111;white-space:pre;-webkit-text-stroke:0.25px #111;">431 324,10 <span class="r">Р</span></div>
<div style="position:absolute;left:-77px;width:600px;text-align:right;top:508.2px;font-size:18px;line-height:18px;font-weight:400;color:#111;white-space:pre;-webkit-text-stroke:0.25px #111;">456 789,00 <span class="r">Р</span></div>
<div style="position:absolute;left:45px;width:600px;text-align:right;top:508.2px;font-size:18px;line-height:18px;font-weight:400;color:#111;white-space:pre;-webkit-text-stroke:0.25px #111;">299 330,20 <span class="r">Р</span></div>
<div style="position:absolute;left:167px;width:600px;text-align:right;top:508.2px;font-size:18px;line-height:18px;font-weight:400;color:#111;white-space:pre;-webkit-text-stroke:0.25px #111;">376 753,20 <span class="r">Р</span></div>
<div style="position:absolute;left:289px;width:600px;text-align:right;top:508.2px;font-size:18px;line-height:18px;font-weight:400;color:#111;white-space:pre;-webkit-text-stroke:0.25px #111;">321 675,50 <span class="r">Р</span></div>
<div style="position:absolute;left:411px;width:600px;text-align:right;top:508.2px;font-size:18px;line-height:18px;font-weight:400;color:#111;white-space:pre;-webkit-text-stroke:0.25px #111;">349 037,71 <span class="r">Р</span></div>
<div style="position:absolute;left:533px;width:600px;text-align:right;top:508.2px;font-size:18px;line-height:18px;font-weight:400;color:#111;white-space:pre;-webkit-text-stroke:0.25px #111;">401 633,67 <span class="r">Р</span></div>
<div style="position:absolute;left:655px;width:600px;text-align:right;top:508.2px;font-size:18px;line-height:18px;font-weight:400;color:#111;white-space:pre;-webkit-text-stroke:0.25px #111;">353 553,00 <span class="r">Р</span></div>
<div style="position:absolute;left:777px;width:600px;text-align:right;top:508.2px;font-size:18px;line-height:18px;font-weight:400;color:#111;white-space:pre;-webkit-text-stroke:0.25px #111;">412 344,60 <span class="r">Р</span></div>
<div style="position:absolute;left:899px;width:600px;text-align:right;top:508.2px;font-size:18px;line-height:18px;font-weight:400;color:#111;white-space:pre;-webkit-text-stroke:0.25px #111;">339 038,07 <span class="r">Р</span></div>
<div style="position:absolute;left:1021px;width:600px;text-align:right;top:508.2px;font-size:18px;line-height:18px;font-weight:400;color:#111;white-space:pre;-webkit-text-stroke:0.25px #111;">318 750,60 <span class="r">Р</span></div>
<div style="position:absolute;left:28px;top:534.8px;font-size:17.7px;line-height:17.7px;font-weight:700;color:#000;white-space:pre;letter-spacing:-0.35px;">Андреев</div>
<div style="position:absolute;left:-321px;width:600px;text-align:right;top:534.2px;font-size:18px;line-height:18px;font-weight:400;color:#111;white-space:pre;-webkit-text-stroke:0.25px #111;">290 349,00 <span class="r">Р</span></div>
<div style="position:absolute;left:-199px;width:600px;text-align:right;top:534.2px;font-size:18px;line-height:18px;font-weight:400;color:#111;white-space:pre;-webkit-text-stroke:0.25px #111;">456 166,90 <span class="r">Р</span></div>
<div style="position:absolute;left:-77px;width:600px;text-align:right;top:534.2px;font-size:18px;line-height:18px;font-weight:400;color:#111;white-space:pre;-webkit-text-stroke:0.25px #111;">455 804,57 <span class="r">Р</span></div>
<div style="position:absolute;left:45px;width:600px;text-align:right;top:534.2px;font-size:18px;line-height:18px;font-weight:400;color:#111;white-space:pre;-webkit-text-stroke:0.25px #111;">286 121,69 <span class="r">Р</span></div>
<div style="position:absolute;left:167px;width:600px;text-align:right;top:534.2px;font-size:18px;line-height:18px;font-weight:400;color:#111;white-space:pre;-webkit-text-stroke:0.25px #111;">379 704,20 <span class="r">Р</span></div>
<div style="position:absolute;left:289px;width:600px;text-align:right;top:534.2px;font-size:18px;line-height:18px;font-weight:400;color:#111;white-space:pre;-webkit-text-stroke:0.25px #111;">309 770,75 <span class="r">Р</span></div>
<div style="position:absolute;left:411px;width:600px;text-align:right;top:534.2px;font-size:18px;line-height:18px;font-weight:400;color:#111;white-space:pre;-webkit-text-stroke:0.25px #111;">351 053,29 <span class="r">Р</span></div>
<div style="position:absolute;left:533px;width:600px;text-align:right;top:534.2px;font-size:18px;line-height:18px;font-weight:400;color:#111;white-space:pre;-webkit-text-stroke:0.25px #111;">405 687,67 <span class="r">Р</span></div>
<div style="position:absolute;left:655px;width:600px;text-align:right;top:534.2px;font-size:18px;line-height:18px;font-weight:400;color:#111;white-space:pre;-webkit-text-stroke:0.25px #111;">345 616,50 <span class="r">Р</span></div>
<div style="position:absolute;left:777px;width:600px;text-align:right;top:534.2px;font-size:18px;line-height:18px;font-weight:400;color:#111;white-space:pre;-webkit-text-stroke:0.25px #111;">431 392,20 <span class="r">Р</span></div>
<div style="position:absolute;left:899px;width:600px;text-align:right;top:534.2px;font-size:18px;line-height:18px;font-weight:400;color:#111;white-space:pre;-webkit-text-stroke:0.25px #111;">343 095,47 <span class="r">Р</span></div>
<div style="position:absolute;left:1021px;width:600px;text-align:right;top:534.2px;font-size:18px;line-height:18px;font-weight:400;color:#111;white-space:pre;-webkit-text-stroke:0.25px #111;">323 619,40 <span class="r">Р</span></div>
<div style="position:absolute;left:28px;top:560.8px;font-size:17.7px;line-height:17.7px;font-weight:700;color:#000;white-space:pre;letter-spacing:-0.35px;">Алексеев</div>
<div style="position:absolute;left:-321px;width:600px;text-align:right;top:560.2px;font-size:18px;line-height:18px;font-weight:400;color:#111;white-space:pre;-webkit-text-stroke:0.25px #111;">294 406,29 <span class="r">Р</span></div>
<div style="position:absolute;left:-199px;width:600px;text-align:right;top:560.2px;font-size:18px;line-height:18px;font-weight:400;color:#111;white-space:pre;-webkit-text-stroke:0.25px #111;">481 009,70 <span class="r">Р</span></div>
<div style="position:absolute;left:-77px;width:600px;text-align:right;top:560.2px;font-size:18px;line-height:18px;font-weight:400;color:#111;white-space:pre;-webkit-text-stroke:0.25px #111;">484 201,18 <span class="r">Р</span></div>
<div style="position:absolute;left:45px;width:600px;text-align:right;top:560.2px;font-size:18px;line-height:18px;font-weight:400;color:#111;white-space:pre;-webkit-text-stroke:0.25px #111;">272 913,17 <span class="r">Р</span></div>
<div style="position:absolute;left:167px;width:600px;text-align:right;top:560.2px;font-size:18px;line-height:18px;font-weight:400;color:#111;white-space:pre;-webkit-text-stroke:0.25px #111;">382 655,20 <span class="r">Р</span></div>
<div style="position:absolute;left:289px;width:600px;text-align:right;top:560.2px;font-size:18px;line-height:18px;font-weight:400;color:#111;white-space:pre;-webkit-text-stroke:0.25px #111;">297 866,00 <span class="r">Р</span></div>
<div style="position:absolute;left:411px;width:600px;text-align:right;top:560.2px;font-size:18px;line-height:18px;font-weight:400;color:#111;white-space:pre;-webkit-text-stroke:0.25px #111;">353 068,86 <span class="r">Р</span></div>
<div style="position:absolute;left:533px;width:600px;text-align:right;top:560.2px;font-size:18px;line-height:18px;font-weight:400;color:#111;white-space:pre;-webkit-text-stroke:0.25px #111;">409 741,67 <span class="r">Р</span></div>
<div style="position:absolute;left:655px;width:600px;text-align:right;top:560.2px;font-size:18px;line-height:18px;font-weight:400;color:#111;white-space:pre;-webkit-text-stroke:0.25px #111;">337 680,00 <span class="r">Р</span></div>
<div style="position:absolute;left:777px;width:600px;text-align:right;top:560.2px;font-size:18px;line-height:18px;font-weight:400;color:#111;white-space:pre;-webkit-text-stroke:0.25px #111;">450 439,80 <span class="r">Р</span></div>
<div style="position:absolute;left:899px;width:600px;text-align:right;top:560.2px;font-size:18px;line-height:18px;font-weight:400;color:#111;white-space:pre;-webkit-text-stroke:0.25px #111;">347 152,87 <span class="r">Р</span></div>
<div style="position:absolute;left:1021px;width:600px;text-align:right;top:560.2px;font-size:18px;line-height:18px;font-weight:400;color:#111;white-space:pre;-webkit-text-stroke:0.25px #111;">328 488,20 <span class="r">Р</span></div>
<div style="position:absolute;left:28px;top:586.8px;font-size:17.7px;line-height:17.7px;font-weight:700;color:#000;white-space:pre;letter-spacing:-0.35px;">Александров</div>
<div style="position:absolute;left:-321px;width:600px;text-align:right;top:586.2px;font-size:18px;line-height:18px;font-weight:400;color:#111;white-space:pre;-webkit-text-stroke:0.25px #111;">298 463,57 <span class="r">Р</span></div>
<div style="position:absolute;left:-199px;width:600px;text-align:right;top:586.2px;font-size:18px;line-height:18px;font-weight:400;color:#111;white-space:pre;-webkit-text-stroke:0.25px #111;">505 852,50 <span class="r">Р</span></div>
<div style="position:absolute;left:-77px;width:600px;text-align:right;top:586.2px;font-size:18px;line-height:18px;font-weight:400;color:#111;white-space:pre;-webkit-text-stroke:0.25px #111;">512 597,79 <span class="r">Р</span></div>
<div style="position:absolute;left:45px;width:600px;text-align:right;top:586.2px;font-size:18px;line-height:18px;font-weight:400;color:#111;white-space:pre;-webkit-text-stroke:0.25px #111;">259 704,66 <span class="r">Р</span></div>
<div style="position:absolute;left:167px;width:600px;text-align:right;top:586.2px;font-size:18px;line-height:18px;font-weight:400;color:#111;white-space:pre;-webkit-text-stroke:0.25px #111;">385 606,20 <span class="r">Р</span></div>
<div style="position:absolute;left:289px;width:600px;text-align:right;top:586.2px;font-size:18px;line-height:18px;font-weight:400;color:#111;white-space:pre;-webkit-text-stroke:0.25px #111;">285 961,25 <span class="r">Р</span></div>
<div style="position:absolute;left:411px;width:600px;text-align:right;top:586.2px;font-size:18px;line-height:18px;font-weight:400;color:#111;white-space:pre;-webkit-text-stroke:0.25px #111;">355 084,43 <span class="r">Р</span></div>
<div style="position:absolute;left:533px;width:600px;text-align:right;top:586.2px;font-size:18px;line-height:18px;font-weight:400;color:#111;white-space:pre;-webkit-text-stroke:0.25px #111;">413 795,67 <span class="r">Р</span></div>
<div style="position:absolute;left:655px;width:600px;text-align:right;top:586.2px;font-size:18px;line-height:18px;font-weight:400;color:#111;white-space:pre;-webkit-text-stroke:0.25px #111;">329 743,50 <span class="r">Р</span></div>
<div style="position:absolute;left:777px;width:600px;text-align:right;top:586.2px;font-size:18px;line-height:18px;font-weight:400;color:#111;white-space:pre;-webkit-text-stroke:0.25px #111;">469 487,40 <span class="r">Р</span></div>
<div style="position:absolute;left:899px;width:600px;text-align:right;top:586.2px;font-size:18px;line-height:18px;font-weight:400;color:#111;white-space:pre;-webkit-text-stroke:0.25px #111;">351 210,27 <span class="r">Р</span></div>
<div style="position:absolute;left:1021px;width:600px;text-align:right;top:586.2px;font-size:18px;line-height:18px;font-weight:400;color:#111;white-space:pre;-webkit-text-stroke:0.25px #111;">333 357,00 <span class="r">Р</span></div>
<div style="position:absolute;left:28px;top:612.8px;font-size:17.7px;line-height:17.7px;font-weight:700;color:#000;white-space:pre;letter-spacing:-0.35px;">Козлов</div>
<div style="position:absolute;left:-321px;width:600px;text-align:right;top:612.2px;font-size:18px;line-height:18px;font-weight:400;color:#111;white-space:pre;-webkit-text-stroke:0.25px #111;">302 520,86 <span class="r">Р</span></div>
<div style="position:absolute;left:-199px;width:600px;text-align:right;top:612.2px;font-size:18px;line-height:18px;font-weight:400;color:#111;white-space:pre;-webkit-text-stroke:0.25px #111;">530 695,30 <span class="r">Р</span></div>
<div style="position:absolute;left:-77px;width:600px;text-align:right;top:612.2px;font-size:18px;line-height:18px;font-weight:400;color:#111;white-space:pre;-webkit-text-stroke:0.25px #111;">540 994,39 <span class="r">Р</span></div>
<div style="position:absolute;left:45px;width:600px;text-align:right;top:612.2px;font-size:18px;line-height:18px;font-weight:400;color:#111;white-space:pre;-webkit-text-stroke:0.25px #111;">246 496,14 <span class="r">Р</span></div>
<div style="position:absolute;left:167px;width:600px;text-align:right;top:612.2px;font-size:18px;line-height:18px;font-weight:400;color:#111;white-space:pre;-webkit-text-stroke:0.25px #111;">388 557,20 <span class="r">Р</span></div>
<div style="position:absolute;left:289px;width:600px;text-align:right;top:612.2px;font-size:18px;line-height:18px;font-weight:400;color:#111;white-space:pre;-webkit-text-stroke:0.25px #111;">274 056,50 <span class="r">Р</span></div>
<div style="position:absolute;left:411px;width:600px;text-align:right;top:612.2px;font-size:18px;line-height:18px;font-weight:400;color:#111;white-space:pre;-webkit-text-stroke:0.25px #111;">357 100,00 <span class="r">Р</span></div>
<div style="position:absolute;left:533px;width:600px;text-align:right;top:612.2px;font-size:18px;line-height:18px;font-weight:400;color:#111;white-space:pre;-webkit-text-stroke:0.25px #111;">417 849,67 <span class="r">Р</span></div>
<div style="position:absolute;left:655px;width:600px;text-align:right;top:612.2px;font-size:18px;line-height:18px;font-weight:400;color:#111;white-space:pre;-webkit-text-stroke:0.25px #111;">321 807,00 <span class="r">Р</span></div>
<div style="position:absolute;left:777px;width:600px;text-align:right;top:612.2px;font-size:18px;line-height:18px;font-weight:400;color:#111;white-space:pre;-webkit-text-stroke:0.25px #111;">488 535,00 <span class="r">Р</span></div>
<div style="position:absolute;left:899px;width:600px;text-align:right;top:612.2px;font-size:18px;line-height:18px;font-weight:400;color:#111;white-space:pre;-webkit-text-stroke:0.25px #111;">355 267,67 <span class="r">Р</span></div>
<div style="position:absolute;left:1021px;width:600px;text-align:right;top:612.2px;font-size:18px;line-height:18px;font-weight:400;color:#111;white-space:pre;-webkit-text-stroke:0.25px #111;">338 225,80 <span class="r">Р</span></div>
<div style="position:absolute;left:28px;top:638.8px;font-size:17.7px;line-height:17.7px;font-weight:700;color:#000;white-space:pre;letter-spacing:-0.35px;">Лебедев</div>
<div style="position:absolute;left:-321px;width:600px;text-align:right;top:638.2px;font-size:18px;line-height:18px;font-weight:400;color:#111;white-space:pre;-webkit-text-stroke:0.25px #111;">306 578,14 <span class="r">Р</span></div>
<div style="position:absolute;left:-199px;width:600px;text-align:right;top:638.2px;font-size:18px;line-height:18px;font-weight:400;color:#111;white-space:pre;-webkit-text-stroke:0.25px #111;">555 538,10 <span class="r">Р</span></div>
<div style="position:absolute;left:-77px;width:600px;text-align:right;top:638.2px;font-size:18px;line-height:18px;font-weight:400;color:#111;white-space:pre;-webkit-text-stroke:0.25px #111;">569 391,00 <span class="r">Р</span></div>
<div style="position:absolute;left:45px;width:600px;text-align:right;top:638.2px;font-size:18px;line-height:18px;font-weight:400;color:#111;white-space:pre;-webkit-text-stroke:0.25px #111;">233 287,63 <span class="r">Р</span></div>
<div style="position:absolute;left:167px;width:600px;text-align:right;top:638.2px;font-size:18px;line-height:18px;font-weight:400;color:#111;white-space:pre;-webkit-text-stroke:0.25px #111;">391 508,20 <span class="r">Р</span></div>
<div style="position:absolute;left:289px;width:600px;text-align:right;top:638.2px;font-size:18px;line-height:18px;font-weight:400;color:#111;white-space:pre;-webkit-text-stroke:0.25px #111;">250 440,00 <span class="r">Р</span></div>
<div style="position:absolute;left:411px;width:600px;text-align:right;top:638.2px;font-size:18px;line-height:18px;font-weight:400;color:#111;white-space:pre;-webkit-text-stroke:0.25px #111;">359 115,14 <span class="r">Р</span></div>
<div style="position:absolute;left:533px;width:600px;text-align:right;top:638.2px;font-size:18px;line-height:18px;font-weight:400;color:#111;white-space:pre;-webkit-text-stroke:0.25px #111;">425 957,67 <span class="r">Р</span></div>
<div style="position:absolute;left:655px;width:600px;text-align:right;top:638.2px;font-size:18px;line-height:18px;font-weight:400;color:#111;white-space:pre;-webkit-text-stroke:0.25px #111;">313 932,00 <span class="r">Р</span></div>
<div style="position:absolute;left:777px;width:600px;text-align:right;top:638.2px;font-size:18px;line-height:18px;font-weight:400;color:#111;white-space:pre;-webkit-text-stroke:0.25px #111;">507 582,60 <span class="r">Р</span></div>
<div style="position:absolute;left:899px;width:600px;text-align:right;top:638.2px;font-size:18px;line-height:18px;font-weight:400;color:#111;white-space:pre;-webkit-text-stroke:0.25px #111;">359 325,07 <span class="r">Р</span></div>
<div style="position:absolute;left:1021px;width:600px;text-align:right;top:638.2px;font-size:18px;line-height:18px;font-weight:400;color:#111;white-space:pre;-webkit-text-stroke:0.25px #111;">343 094,60 <span class="r">Р</span></div>
<div style="position:absolute;left:28px;top:664.8px;font-size:17.7px;line-height:17.7px;font-weight:700;color:#000;white-space:pre;letter-spacing:-0.35px;">Григорьев</div>
<div style="position:absolute;left:-321px;width:600px;text-align:right;top:664.2px;font-size:18px;line-height:18px;font-weight:400;color:#111;white-space:pre;-webkit-text-stroke:0.25px #111;">310 635,43 <span class="r">Р</span></div>
<div style="position:absolute;left:-199px;width:600px;text-align:right;top:664.2px;font-size:18px;line-height:18px;font-weight:400;color:#111;white-space:pre;-webkit-text-stroke:0.25px #111;">580 380,90 <span class="r">Р</span></div>
<div style="position:absolute;left:-77px;width:600px;text-align:right;top:664.2px;font-size:18px;line-height:18px;font-weight:400;color:#111;white-space:pre;-webkit-text-stroke:0.25px #111;">597 787,61 <span class="r">Р</span></div>
<div style="position:absolute;left:45px;width:600px;text-align:right;top:664.2px;font-size:18px;line-height:18px;font-weight:400;color:#111;white-space:pre;-webkit-text-stroke:0.25px #111;">220 079,11 <span class="r">Р</span></div>
<div style="position:absolute;left:167px;width:600px;text-align:right;top:664.2px;font-size:18px;line-height:18px;font-weight:400;color:#111;white-space:pre;-webkit-text-stroke:0.25px #111;">394 459,20 <span class="r">Р</span></div>
<div style="position:absolute;left:289px;width:600px;text-align:right;top:664.2px;font-size:18px;line-height:18px;font-weight:400;color:#111;white-space:pre;-webkit-text-stroke:0.25px #111;">238 535,25 <span class="r">Р</span></div>
<div style="position:absolute;left:411px;width:600px;text-align:right;top:664.2px;font-size:18px;line-height:18px;font-weight:400;color:#111;white-space:pre;-webkit-text-stroke:0.25px #111;">361 130,71 <span class="r">Р</span></div>
<div style="position:absolute;left:533px;width:600px;text-align:right;top:664.2px;font-size:18px;line-height:18px;font-weight:400;color:#111;white-space:pre;-webkit-text-stroke:0.25px #111;">430 011,67 <span class="r">Р</span></div>
<div style="position:absolute;left:655px;width:600px;text-align:right;top:664.2px;font-size:18px;line-height:18px;font-weight:400;color:#111;white-space:pre;-webkit-text-stroke:0.25px #111;">305 995,50 <span class="r">Р</span></div>
<div style="position:absolute;left:777px;width:600px;text-align:right;top:664.2px;font-size:18px;line-height:18px;font-weight:400;color:#111;white-space:pre;-webkit-text-stroke:0.25px #111;">526 630,20 <span class="r">Р</span></div>
<div style="position:absolute;left:899px;width:600px;text-align:right;top:664.2px;font-size:18px;line-height:18px;font-weight:400;color:#111;white-space:pre;-webkit-text-stroke:0.25px #111;">363 382,47 <span class="r">Р</span></div>
<div style="position:absolute;left:1021px;width:600px;text-align:right;top:664.2px;font-size:18px;line-height:18px;font-weight:400;color:#111;white-space:pre;-webkit-text-stroke:0.25px #111;">347 963,40 <span class="r">Р</span></div>
<div style="position:absolute;left:28px;top:690.8px;font-size:17.7px;line-height:17.7px;font-weight:700;color:#000;white-space:pre;letter-spacing:-0.35px;">Степанов</div>
<div style="position:absolute;left:-321px;width:600px;text-align:right;top:690.2px;font-size:18px;line-height:18px;font-weight:400;color:#111;white-space:pre;-webkit-text-stroke:0.25px #111;">314 692,71 <span class="r">Р</span></div>
<div style="position:absolute;left:-199px;width:600px;text-align:right;top:690.2px;font-size:18px;line-height:18px;font-weight:400;color:#111;white-space:pre;-webkit-text-stroke:0.25px #111;">605 223,70 <span class="r">Р</span></div>
<div style="position:absolute;left:-77px;width:600px;text-align:right;top:690.2px;font-size:18px;line-height:18px;font-weight:400;color:#111;white-space:pre;-webkit-text-stroke:0.25px #111;">626 184,21 <span class="r">Р</span></div>
<div style="position:absolute;left:45px;width:600px;text-align:right;top:690.2px;font-size:18px;line-height:18px;font-weight:400;color:#111;white-space:pre;-webkit-text-stroke:0.25px #111;">206 870,60 <span class="r">Р</span></div>
<div style="position:absolute;left:167px;width:600px;text-align:right;top:690.2px;font-size:18px;line-height:18px;font-weight:400;color:#111;white-space:pre;-webkit-text-stroke:0.25px #111;">397 410,20 <span class="r">Р</span></div>
<div style="position:absolute;left:289px;width:600px;text-align:right;top:690.2px;font-size:18px;line-height:18px;font-weight:400;color:#111;white-space:pre;-webkit-text-stroke:0.25px #111;">226 630,50 <span class="r">Р</span></div>
<div style="position:absolute;left:411px;width:600px;text-align:right;top:690.2px;font-size:18px;line-height:18px;font-weight:400;color:#111;white-space:pre;-webkit-text-stroke:0.25px #111;">363 146,29 <span class="r">Р</span></div>
<div style="position:absolute;left:533px;width:600px;text-align:right;top:690.2px;font-size:18px;line-height:18px;font-weight:400;color:#111;white-space:pre;-webkit-text-stroke:0.25px #111;">434 065,67 <span class="r">Р</span></div>
<div style="position:absolute;left:655px;width:600px;text-align:right;top:690.2px;font-size:18px;line-height:18px;font-weight:400;color:#111;white-space:pre;-webkit-text-stroke:0.25px #111;">298 059,00 <span class="r">Р</span></div>
<div style="position:absolute;left:777px;width:600px;text-align:right;top:690.2px;font-size:18px;line-height:18px;font-weight:400;color:#111;white-space:pre;-webkit-text-stroke:0.25px #111;">545 677,80 <span class="r">Р</span></div>
<div style="position:absolute;left:899px;width:600px;text-align:right;top:690.2px;font-size:18px;line-height:18px;font-weight:400;color:#111;white-space:pre;-webkit-text-stroke:0.25px #111;">367 439,87 <span class="r">Р</span></div>
<div style="position:absolute;left:1021px;width:600px;text-align:right;top:690.2px;font-size:18px;line-height:18px;font-weight:400;color:#111;white-space:pre;-webkit-text-stroke:0.25px #111;">352 832,20 <span class="r">Р</span></div>
<div style="position:absolute;left:28px;top:716.8px;font-size:17.7px;line-height:17.7px;font-weight:700;color:#000;white-space:pre;letter-spacing:-0.35px;">Семёнов</div>
<div style="position:absolute;left:-321px;width:600px;text-align:right;top:716.2px;font-size:18px;line-height:18px;font-weight:400;color:#111;white-space:pre;-webkit-text-stroke:0.25px #111;">318 750,00 <span class="r">Р</span></div>
<div style="position:absolute;left:-199px;width:600px;text-align:right;top:716.2px;font-size:18px;line-height:18px;font-weight:400;color:#111;white-space:pre;-webkit-text-stroke:0.25px #111;">630 066,50 <span class="r">Р</span></div>
<div style="position:absolute;left:-77px;width:600px;text-align:right;top:716.2px;font-size:18px;line-height:18px;font-weight:400;color:#111;white-space:pre;-webkit-text-stroke:0.25px #111;">654 580,82 <span class="r">Р</span></div>
<div style="position:absolute;left:45px;width:600px;text-align:right;top:716.2px;font-size:18px;line-height:18px;font-weight:400;color:#111;white-space:pre;-webkit-text-stroke:0.25px #111;">193 662,09 <span class="r">Р</span></div>
<div style="position:absolute;left:167px;width:600px;text-align:right;top:716.2px;font-size:18px;line-height:18px;font-weight:400;color:#111;white-space:pre;-webkit-text-stroke:0.25px #111;">400 361,20 <span class="r">Р</span></div>
<div style="position:absolute;left:289px;width:600px;text-align:right;top:716.2px;font-size:18px;line-height:18px;font-weight:400;color:#111;white-space:pre;-webkit-text-stroke:0.25px #111;">214 725,75 <span class="r">Р</span></div>
<div style="position:absolute;left:411px;width:600px;text-align:right;top:716.2px;font-size:18px;line-height:18px;font-weight:400;color:#111;white-space:pre;-webkit-text-stroke:0.25px #111;">365 161,86 <span class="r">Р</span></div>
<div style="position:absolute;left:533px;width:600px;text-align:right;top:716.2px;font-size:18px;line-height:18px;font-weight:400;color:#111;white-space:pre;-webkit-text-stroke:0.25px #111;">438 119,67 <span class="r">Р</span></div>
<div style="position:absolute;left:655px;width:600px;text-align:right;top:716.2px;font-size:18px;line-height:18px;font-weight:400;color:#111;white-space:pre;-webkit-text-stroke:0.25px #111;">290 122,50 <span class="r">Р</span></div>
<div style="position:absolute;left:777px;width:600px;text-align:right;top:716.2px;font-size:18px;line-height:18px;font-weight:400;color:#111;white-space:pre;-webkit-text-stroke:0.25px #111;">564 725,40 <span class="r">Р</span></div>
<div style="position:absolute;left:899px;width:600px;text-align:right;top:716.2px;font-size:18px;line-height:18px;font-weight:400;color:#111;white-space:pre;-webkit-text-stroke:0.25px #111;">371 497,27 <span class="r">Р</span></div>
<div style="position:absolute;left:1021px;width:600px;text-align:right;top:716.2px;font-size:18px;line-height:18px;font-weight:400;color:#111;white-space:pre;-webkit-text-stroke:0.25px #111;">357 701,00 <span class="r">Р</span></div>
<div style="position:absolute;left:28px;top:742.8px;font-size:17.7px;line-height:17.7px;font-weight:700;color:#000;white-space:pre;letter-spacing:-0.35px;">Павлов</div>
<div style="position:absolute;left:-321px;width:600px;text-align:right;top:742.2px;font-size:18px;line-height:18px;font-weight:400;color:#111;white-space:pre;-webkit-text-stroke:0.25px #111;">322 807,29 <span class="r">Р</span></div>
<div style="position:absolute;left:-199px;width:600px;text-align:right;top:742.2px;font-size:18px;line-height:18px;font-weight:400;color:#111;white-space:pre;-webkit-text-stroke:0.25px #111;">654 909,30 <span class="r">Р</span></div>
<div style="position:absolute;left:-77px;width:600px;text-align:right;top:742.2px;font-size:18px;line-height:18px;font-weight:400;color:#111;white-space:pre;-webkit-text-stroke:0.25px #111;">682 977,43 <span class="r">Р</span></div>
<div style="position:absolute;left:45px;width:600px;text-align:right;top:742.2px;font-size:18px;line-height:18px;font-weight:400;color:#111;white-space:pre;-webkit-text-stroke:0.25px #111;">180 453,57 <span class="r">Р</span></div>
<div style="position:absolute;left:167px;width:600px;text-align:right;top:742.2px;font-size:18px;line-height:18px;font-weight:400;color:#111;white-space:pre;-webkit-text-stroke:0.25px #111;">403 312,20 <span class="r">Р</span></div>
<div style="position:absolute;left:289px;width:600px;text-align:right;top:742.2px;font-size:18px;line-height:18px;font-weight:400;color:#111;white-space:pre;-webkit-text-stroke:0.25px #111;">202 821,00 <span class="r">Р</span></div>
<div style="position:absolute;left:411px;width:600px;text-align:right;top:742.2px;font-size:18px;line-height:18px;font-weight:400;color:#111;white-space:pre;-webkit-text-stroke:0.25px #111;">367 177,43 <span class="r">Р</span></div>
<div style="position:absolute;left:533px;width:600px;text-align:right;top:742.2px;font-size:18px;line-height:18px;font-weight:400;color:#111;white-space:pre;-webkit-text-stroke:0.25px #111;">442 173,67 <span class="r">Р</span></div>
<div style="position:absolute;left:655px;width:600px;text-align:right;top:742.2px;font-size:18px;line-height:18px;font-weight:400;color:#111;white-space:pre;-webkit-text-stroke:0.25px #111;">282 186,00 <span class="r">Р</span></div>
<div style="position:absolute;left:777px;width:600px;text-align:right;top:742.2px;font-size:18px;line-height:18px;font-weight:400;color:#111;white-space:pre;-webkit-text-stroke:0.25px #111;">583 773,00 <span class="r">Р</span></div>
<div style="position:absolute;left:899px;width:600px;text-align:right;top:742.2px;font-size:18px;line-height:18px;font-weight:400;color:#111;white-space:pre;-webkit-text-stroke:0.25px #111;">375 554,67 <span class="r">Р</span></div>
<div style="position:absolute;left:1021px;width:600px;text-align:right;top:742.2px;font-size:18px;line-height:18px;font-weight:400;color:#111;white-space:pre;-webkit-text-stroke:0.25px #111;">362 569,80 <span class="r">Р</span></div>
<div style="position:absolute;left:28px;top:768.8px;font-size:17.7px;line-height:17.7px;font-weight:700;color:#000;white-space:pre;letter-spacing:-0.35px;">Богданов</div>
<div style="position:absolute;left:-321px;width:600px;text-align:right;top:768.2px;font-size:18px;line-height:18px;font-weight:400;color:#111;white-space:pre;-webkit-text-stroke:0.25px #111;">326 864,57 <span class="r">Р</span></div>
<div style="position:absolute;left:-199px;width:600px;text-align:right;top:768.2px;font-size:18px;line-height:18px;font-weight:400;color:#111;white-space:pre;-webkit-text-stroke:0.25px #111;">679 752,10 <span class="r">Р</span></div>
<div style="position:absolute;left:-77px;width:600px;text-align:right;top:768.2px;font-size:18px;line-height:18px;font-weight:400;color:#111;white-space:pre;-webkit-text-stroke:0.25px #111;">711 374,04 <span class="r">Р</span></div>
<div style="position:absolute;left:45px;width:600px;text-align:right;top:768.2px;font-size:18px;line-height:18px;font-weight:400;color:#111;white-space:pre;-webkit-text-stroke:0.25px #111;">167 245,06 <span class="r">Р</span></div>
<div style="position:absolute;left:167px;width:600px;text-align:right;top:768.2px;font-size:18px;line-height:18px;font-weight:400;color:#111;white-space:pre;-webkit-text-stroke:0.25px #111;">406 263,20 <span class="r">Р</span></div>
<div style="position:absolute;left:289px;width:600px;text-align:right;top:768.2px;font-size:18px;line-height:18px;font-weight:400;color:#111;white-space:pre;-webkit-text-stroke:0.25px #111;">190 916,25 <span class="r">Р</span></div>
<div style="position:absolute;left:411px;width:600px;text-align:right;top:768.2px;font-size:18px;line-height:18px;font-weight:400;color:#111;white-space:pre;-webkit-text-stroke:0.25px #111;">369 193,00 <span class="r">Р</span></div>
<div style="position:absolute;left:533px;width:600px;text-align:right;top:768.2px;font-size:18px;line-height:18px;font-weight:400;color:#111;white-space:pre;-webkit-text-stroke:0.25px #111;">446 227,67 <span class="r">Р</span></div>
<div style="position:absolute;left:655px;width:600px;text-align:right;top:768.2px;font-size:18px;line-height:18px;font-weight:400;color:#111;white-space:pre;-webkit-text-stroke:0.25px #111;">274 249,50 <span class="r">Р</span></div>
<div style="position:absolute;left:777px;width:600px;text-align:right;top:768.2px;font-size:18px;line-height:18px;font-weight:400;color:#111;white-space:pre;-webkit-text-stroke:0.25px #111;">602 820,60 <span class="r">Р</span></div>
<div style="position:absolute;left:899px;width:600px;text-align:right;top:768.2px;font-size:18px;line-height:18px;font-weight:400;color:#111;white-space:pre;-webkit-text-stroke:0.25px #111;">379 612,07 <span class="r">Р</span></div>
<div style="position:absolute;left:1021px;width:600px;text-align:right;top:768.2px;font-size:18px;line-height:18px;font-weight:400;color:#111;white-space:pre;-webkit-text-stroke:0.25px #111;">367 438,60 <span class="r">Р</span></div>
<div style="position:absolute;left:28px;top:794.8px;font-size:17.7px;line-height:17.7px;font-weight:700;color:#000;white-space:pre;letter-spacing:-0.35px;">Николаев</div>
<div style="position:absolute;left:-321px;width:600px;text-align:right;top:794.2px;font-size:18px;line-height:18px;font-weight:400;color:#111;white-space:pre;-webkit-text-stroke:0.25px #111;">330 921,86 <span class="r">Р</span></div>
<div style="position:absolute;left:-199px;width:600px;text-align:right;top:794.2px;font-size:18px;line-height:18px;font-weight:400;color:#111;white-space:pre;-webkit-text-stroke:0.25px #111;">704 594,90 <span class="r">Р</span></div>
<div style="position:absolute;left:-77px;width:600px;text-align:right;top:794.2px;font-size:18px;line-height:18px;font-weight:400;color:#111;white-space:pre;-webkit-text-stroke:0.25px #111;">739 770,64 <span class="r">Р</span></div>
<div style="position:absolute;left:45px;width:600px;text-align:right;top:794.2px;font-size:18px;line-height:18px;font-weight:400;color:#111;white-space:pre;-webkit-text-stroke:0.25px #111;">154 036,54 <span class="r">Р</span></div>
<div style="position:absolute;left:167px;width:600px;text-align:right;top:794.2px;font-size:18px;line-height:18px;font-weight:400;color:#111;white-space:pre;-webkit-text-stroke:0.25px #111;">409 214,20 <span class="r">Р</span></div>
<div style="position:absolute;left:289px;width:600px;text-align:right;top:794.2px;font-size:18px;line-height:18px;font-weight:400;color:#111;white-space:pre;-webkit-text-stroke:0.25px #111;">179 011,50 <span class="r">Р</span></div>
<div style="position:absolute;left:411px;width:600px;text-align:right;top:794.2px;font-size:18px;line-height:18px;font-weight:400;color:#111;white-space:pre;-webkit-text-stroke:0.25px #111;">371 208,57 <span class="r">Р</span></div>
<div style="position:absolute;left:533px;width:600px;text-align:right;top:794.2px;font-size:18px;line-height:18px;font-weight:400;color:#111;white-space:pre;-webkit-text-stroke:0.25px #111;">450 281,67 <span class="r">Р</span></div>
<div style="position:absolute;left:655px;width:600px;text-align:right;top:794.2px;font-size:18px;line-height:18px;font-weight:400;color:#111;white-space:pre;-webkit-text-stroke:0.25px #111;">266 313,00 <span class="r">Р</span></div>
<div style="position:absolute;left:777px;width:600px;text-align:right;top:794.2px;font-size:18px;line-height:18px;font-weight:400;color:#111;white-space:pre;-webkit-text-stroke:0.25px #111;">621 868,20 <span class="r">Р</span></div>
<div style="position:absolute;left:899px;width:600px;text-align:right;top:794.2px;font-size:18px;line-height:18px;font-weight:400;color:#111;white-space:pre;-webkit-text-stroke:0.25px #111;">383 669,47 <span class="r">Р</span></div>
<div style="position:absolute;left:1021px;width:600px;text-align:right;top:794.2px;font-size:18px;line-height:18px;font-weight:400;color:#111;white-space:pre;-webkit-text-stroke:0.25px #111;">372 307,40 <span class="r">Р</span></div>
<div style="position:absolute;left:0px;top:901px;width:1740px;height:14px;background:#fff"></div>
<div style="position:absolute;left:-10px;top:901px;width:137.5px;height:20px;background:#ececec;border:1px solid #dedede;border-radius:6px"></div>
<div style="position:absolute;left:140.5px;top:910.0px;font-size:17px;line-height:17px;font-weight:700;color:#1a1a1a;white-space:pre;">Лист1</div>
<div style="position:absolute;left:194.5px;top:901px;width:1560px;height:20px;background:#ededed;border:1px solid #dedede;border-radius:6px 0 0 0"></div>
<div style="position:absolute;left:199px;top:909px;width:1px;height:10px;background:#b0b0b0"></div>
<div style="position:absolute;left:277px;top:909px;width:1px;height:10px;background:#c8c8c8"></div>
<div style="position:absolute;left:338px;top:909px;width:1px;height:10px;background:#b0b0b0"></div>
<div style="position:absolute;left:25px;top:912px;width:1px;height:6px;background:#999"></div>
<div style="position:absolute;left:61px;top:912px;width:1px;height:6px;background:#999"></div>
<div style="position:absolute;left:663px;top:270px;width:567px;height:359px;background:#f0f0f0;border:1px solid #7a7a7a;box-shadow:0 0 14px 3px rgba(0,0,0,0.28)"></div>
<div style="position:absolute;left:664px;top:271px;width:565px;height:37px;background:#fff"></div>
<div style="position:absolute;left:673px;top:282.7px;font-size:14.5px;line-height:14.5px;font-weight:400;color:#1a1a1a;white-space:pre;">Удалить дубликаты</div>
<div style="position:absolute;left:1139px;top:282.2px;font-size:15px;line-height:15px;font-weight:400;color:#1a1a1a;white-space:pre;">?</div>
<svg style="position:absolute;left:1192px;top:283px;" width="14" height="14" viewBox="0 0 14 14" fill="none"><path d="M1 1l12 12M13 1L1 13" stroke="#1a1a1a" stroke-width="1.1"/></svg>
<div style="position:absolute;left:673px;top:320.4px;font-size:13px;line-height:13px;font-weight:400;color:#1a1a1a;white-space:pre;">Чтобы удалить повторяющиеся значения, выделите один или несколько столбцов,</div>
<div style="position:absolute;left:673px;top:336.9px;font-size:13px;line-height:13px;font-weight:400;color:#1a1a1a;white-space:pre;">содержащих их.</div>
<div style="position:absolute;left:671px;top:356px;width:551px;height:52px;border:1px solid #dcdcdc;box-shadow:inset 1px 1px 0 #fff"></div>
<div style="position:absolute;left:685px;top:368px;width:124px;height:30px;background:#e1e1e1;border:1px solid #adadad"></div>
<svg style="position:absolute;left:694px;top:373px;" width="21" height="20" viewBox="0 0 21 20" fill="none"><path d="M8 3.5h12M8 6.5h12M8 10h12M8 13h12M8 16.5h12M8 19h12" stroke="#5a6b8c" stroke-width="1.2"/><path d="M1 2.5l2 2 3.5-4M1 9l2 2 3.5-4M1 15.5l2 2 3.5-4" stroke="#2aa748" stroke-width="1.8"/></svg>
<div style="position:absolute;left:718px;top:377.8px;font-size:12.6px;line-height:12.6px;font-weight:400;color:#1a1a1a;white-space:pre;"><span class="u">В</span>ыделить все</div>
<div style="position:absolute;left:822px;top:368px;width:147px;height:30px;background:#e1e1e1;border:1px solid #adadad"></div>
<svg style="position:absolute;left:832px;top:374px;" width="21" height="19" viewBox="0 0 21 19" fill="none"><rect x="0.5" y="0.5" width="4" height="4" stroke="#5a6b8c" stroke-width="1"/><rect x="0.5" y="7" width="4" height="4" stroke="#5a6b8c" stroke-width="1"/><rect x="0.5" y="13.5" width="4" height="4" stroke="#5a6b8c" stroke-width="1"/><path d="M7 1.5h13M7 4h13M7 8h13M7 10.5h13M7 14.5h13M7 17h13" stroke="#5a6b8c" stroke-width="1.2"/></svg>
<div style="position:absolute;left:855px;top:377.8px;font-size:12.6px;line-height:12.6px;font-weight:400;color:#1a1a1a;white-space:pre;">Сн<span class="u">я</span>ть выделение</div>
<div style="position:absolute;left:981px;top:369px;width:16px;height:16px;background:#fff;border:1px solid #333"></div>
<svg style="position:absolute;left:983px;top:371px;" width="12" height="12" viewBox="0 0 12 12" fill="none"><path d="M1.5 6l3 3.2 6-7" stroke="#333" stroke-width="1.3"/></svg>
<div style="position:absolute;left:1003px;top:367px;width:206px;height:21px;border:1px dotted #1a1a1a"></div>
<div style="position:absolute;left:1005.5px;top:372.4px;font-size:13px;line-height:13px;font-weight:400;color:#1a1a1a;white-space:pre;">Мои данные содержат <span class="u">з</span>аголовки</div>
<div style="position:absolute;left:671px;top:424px;width:551px;height:145px;background:#fff;border:1px solid #828282"></div>
<div style="position:absolute;left:678px;top:433.4px;font-size:13px;line-height:13px;font-weight:400;color:#1a1a1a;white-space:pre;">Колонны</div>
<div style="position:absolute;left:674px;top:455.5px;width:16px;height:16px;background:#fff;border:1px solid #333"></div>
<svg style="position:absolute;left:676px;top:457.5px;" width="12" height="12" viewBox="0 0 12 12" fill="none"><path d="M1.5 6l3 3.2 6-7" stroke="#333" stroke-width="1.3"/></svg>
<div style="position:absolute;left:698px;top:458.9px;font-size:13px;line-height:13px;font-weight:400;color:#1a1a1a;white-space:pre;">(Столбец A)</div>
<div style="position:absolute;left:674px;top:478.5px;width:16px;height:16px;background:#fff;border:1px solid #333"></div>
<svg style="position:absolute;left:676px;top:480.5px;" width="12" height="12" viewBox="0 0 12 12" fill="none"><path d="M1.5 6l3 3.2 6-7" stroke="#333" stroke-width="1.3"/></svg>
<div style="position:absolute;left:698px;top:481.9px;font-size:13px;line-height:13px;font-weight:400;color:#1a1a1a;white-space:pre;">Январь</div>
<div style="position:absolute;left:674px;top:501.5px;width:16px;height:16px;background:#fff;border:1px solid #333"></div>
<svg style="position:absolute;left:676px;top:503.5px;" width="12" height="12" viewBox="0 0 12 12" fill="none"><path d="M1.5 6l3 3.2 6-7" stroke="#333" stroke-width="1.3"/></svg>
<div style="position:absolute;left:698px;top:504.9px;font-size:13px;line-height:13px;font-weight:400;color:#1a1a1a;white-space:pre;">Февраль</div>
<div style="position:absolute;left:674px;top:524.5px;width:16px;height:16px;background:#fff;border:1px solid #333"></div>
<svg style="position:absolute;left:676px;top:526.5px;" width="12" height="12" viewBox="0 0 12 12" fill="none"><path d="M1.5 6l3 3.2 6-7" stroke="#333" stroke-width="1.3"/></svg>
<div style="position:absolute;left:698px;top:528.0px;font-size:13px;line-height:13px;font-weight:400;color:#1a1a1a;white-space:pre;">Март</div>
<div style="position:absolute;left:674px;top:547.5px;width:16px;height:16px;background:#fff;border:1px solid #333"></div>
<svg style="position:absolute;left:676px;top:549.5px;" width="12" height="12" viewBox="0 0 12 12" fill="none"><path d="M1.5 6l3 3.2 6-7" stroke="#333" stroke-width="1.3"/></svg>
<div style="position:absolute;left:698px;top:551.0px;font-size:13px;line-height:13px;font-weight:400;color:#1a1a1a;white-space:pre;">Апрель</div>
<div style="position:absolute;left:1198.5px;top:425px;width:22px;height:143px;background:#f0f0f0"></div>
<div style="position:absolute;left:1200.5px;top:447px;width:18px;height:42px;background:#cdcdcd"></div>
<svg style="position:absolute;left:1203px;top:430px;" width="12" height="9" viewBox="0 0 12 9" fill="none"><path d="M1.5 7l4.5-4.5 4.5 4.5" stroke="#606060" stroke-width="1.5"/></svg>
<svg style="position:absolute;left:1203px;top:551px;" width="12" height="9" viewBox="0 0 12 9" fill="none"><path d="M1.5 2l4.5 4.5 4.5-4.5" stroke="#606060" stroke-width="1.5"/></svg>
<div style="position:absolute;left:1036px;top:590px;width:86px;height:28px;background:#e1e1e1;border:2px solid #0078d7"></div>
<div style="position:absolute;left:779px;width:600px;text-align:center;top:598.5px;font-size:13px;line-height:13px;font-weight:400;color:#1a1a1a;white-space:pre;">OK</div>
<div style="position:absolute;left:1135px;top:590px;width:86px;height:28px;background:#e1e1e1;border:1px solid #adadad"></div>
<div style="position:absolute;left:878px;width:600px;text-align:center;top:598.5px;font-size:13px;line-height:13px;font-weight:400;color:#1a1a1a;white-space:pre;">Отмена</div>
<svg style="position:absolute;left:1215px;top:612px;" width="14" height="15" viewBox="0 0 14 15" fill="none"><rect x="9" y="3" width="3" height="3" fill="#c4c4c4"/><rect x="5" y="7" width="3" height="3" fill="#c4c4c4"/><rect x="9" y="7" width="3" height="3" fill="#c4c4c4"/><rect x="1" y="11" width="3" height="3" fill="#c4c4c4"/><rect x="5" y="11" width="3" height="3" fill="#c4c4c4"/><rect x="9" y="11" width="3" height="3" fill="#c4c4c4"/></svg>
<svg style="position:absolute;left:0px;top:0px;pointer-events:none" width="1740" height="915" viewBox="0 0 1740 915" fill="none"><path d="M277 541.5 L620.5 500 L619.2 495.4 L658.5 500.5 L621.3 513.2 L620.8 508 L278 545.5z" fill="#bf111b"/></svg>
</body></html>
